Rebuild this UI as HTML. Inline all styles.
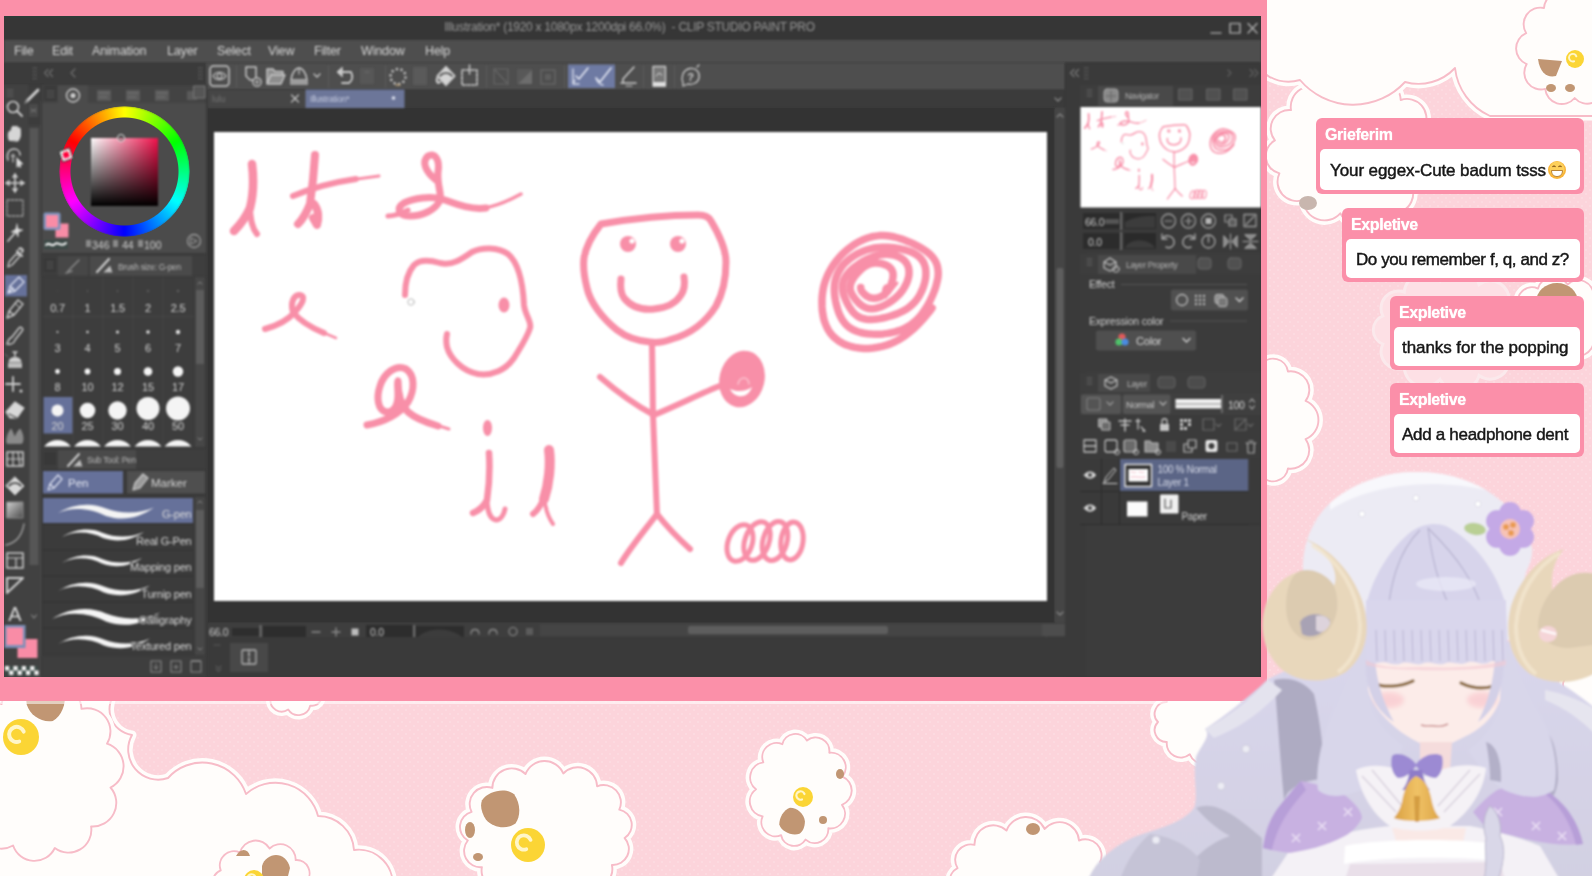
<!DOCTYPE html>
<html lang="en">
<head>
<meta charset="utf-8">
<title>Stream – CLIP STUDIO PAINT PRO</title>
<style>
*{box-sizing:border-box;margin:0;padding:0}
html,body{width:1592px;height:876px;overflow:hidden;background:#fcd6dd;font-family:"Liberation Sans",sans-serif}
#root{position:relative;width:1592px;height:876px;overflow:hidden;background:#fcd5dc}
.abs{position:absolute}
#backdrop,#avatar{position:absolute;left:0;top:0;width:1592px;height:876px}
#frame{position:absolute;left:0;top:0;width:1267px;height:701px;background:#fb90a9}
#win{position:absolute;left:4px;top:16px;width:1257px;height:661px;background:#3a3a3a;overflow:hidden;color:#d4d4d4;font-size:11.5px}
#win>*{filter:blur(.8px)}
#win>#titlebar,#win>#viewport{filter:none}
#win div,#win span,#win svg{position:absolute}
/* chrome rows */
#titlebar{left:0;top:0;width:1257px;height:24px;background:#363636;border-top:2px solid #2f3b38}
#title{left:-3px;top:4px;width:1257px;text-align:center;color:#979797;font-size:12px;letter-spacing:-.27px;white-space:pre}
#menubar{left:0;top:24px;width:1257px;height:23px;background:#4e4e4e}
#menubar span{top:4px;color:#d6d6d6;font-size:12.5px;letter-spacing:-.15px}
#tb-left{left:0;top:47px;width:202px;height:22px;background:#3b3b3b}
#tb-main{left:202px;top:47px;width:1055px;height:27px;background:#4e4e4e}
#tabrow{left:204px;top:74px;width:857px;height:18px;background:#3b3b3b}
#viewport{left:204px;top:92px;width:847px;height:515px;background:#333}
#canvas{left:210px;top:116px;width:833px;height:469px;background:#fff}
#vscroll{left:1051px;top:92px;width:10px;height:515px;background:#444}
#statusrow{left:204px;top:607px;width:857px;height:17px;background:#3d3d3d}
#bottomrow{left:204px;top:624px;width:857px;height:37px;background:#393939}
#toolcol{left:0;top:69px;width:24px;height:592px;background:#424242}
#toolstrip{left:24px;top:85px;width:13px;height:576px;background:#525252}
#leftdock{left:38px;top:69px;width:165px;height:592px;background:#3a3a3a}
#gapR{left:1061px;top:47px;width:15px;height:614px;background:#383838}
#rightdock{left:1076px;top:47px;width:181px;height:614px;background:#343434}
/* chat */
.bub{position:absolute;background:#fb8fa9;border-radius:6px;right:8px;height:74px;filter:blur(.5px)}
.bub .nm{position:absolute;left:9px;top:8px;color:#fff;font-weight:bold;font-size:16px;letter-spacing:-.4px;text-shadow:0 0 1px #fff}
.bub .msg{position:absolute;left:4px;right:4px;top:31px;bottom:4px;background:#fff;border-radius:5px;color:#161616;font-size:17px;line-height:41px;padding-left:10px;white-space:nowrap;letter-spacing:-.3px;-webkit-text-stroke:.45px #161616}
.bub .msg svg{position:absolute;top:11px}
#m1{letter-spacing:-.1px;line-height:44px}#m2{letter-spacing:-.43px}#m3{letter-spacing:-.08px;padding-left:8px}#m4{padding-left:8px;letter-spacing:-.3px}
</style>
</head>
<body>
<div id="root">
<!--BACKDROP-->
<svg id="backdrop" viewBox="0 0 1592 876">
<defs><pattern id="dots" width="8" height="8" patternUnits="userSpaceOnUse"><circle cx="2" cy="2" r="0.9" fill="#fddde3"/><circle cx="6" cy="6" r="0.9" fill="#fddde3"/></pattern></defs>
<rect width="1592" height="876" fill="#fcd4db"/><rect width="1592" height="876" fill="url(#dots)"/>
<path d="M118,690 A26,26 0 0 0 132,735 A30,30 0 0 0 168,778 A46,46 0 0 1 246,794 A44,44 0 0 1 318,816 A36,36 0 0 1 354,850 A34,34 0 0 1 392,890 L-20,890 L-20,690Z" fill="#fffdfb" stroke="#fffdfb" stroke-width="9" stroke-linejoin="round"/><path d="M118,690 A26,26 0 0 0 132,735 A30,30 0 0 0 168,778 A46,46 0 0 1 246,794 A44,44 0 0 1 318,816 A36,36 0 0 1 354,850 A34,34 0 0 1 392,890 L-20,890 L-20,690Z" fill="#fffdfb" stroke="#f7bcc8" stroke-width="1.9" stroke-linejoin="round"/>
<path d="M110.5,787.5 A23.5,23.5 0 0 1 91.1,826.4 A22.8,22.8 0 0 1 54.8,848.0 A22.5,22.5 0 0 1 13.1,845.5 A22.9,22.9 0 0 1 -20.6,819.6 A23.6,23.6 0 0 1 -35.7,778.7 A23.7,23.7 0 0 1 -27.4,735.6 A23.1,23.1 0 0 1 1.6,704.1 A22.6,22.6 0 0 1 42.2,694.1 A22.7,22.7 0 0 1 81.5,708.9 A23.3,23.3 0 0 1 107.0,743.7 A23.7,23.7 0 0 1 110.5,787.5Z" fill="#fffdfb" stroke="#fffdfb" stroke-width="9" stroke-linejoin="round"/><path d="M110.5,787.5 A23.5,23.5 0 0 1 91.1,826.4 A22.8,22.8 0 0 1 54.8,848.0 A22.5,22.5 0 0 1 13.1,845.5 A22.9,22.9 0 0 1 -20.6,819.6 A23.6,23.6 0 0 1 -35.7,778.7 A23.7,23.7 0 0 1 -27.4,735.6 A23.1,23.1 0 0 1 1.6,704.1 A22.6,22.6 0 0 1 42.2,694.1 A22.7,22.7 0 0 1 81.5,708.9 A23.3,23.3 0 0 1 107.0,743.7 A23.7,23.7 0 0 1 110.5,787.5Z" fill="#fffdfb" stroke="#f7bcc8" stroke-width="1.9" stroke-linejoin="round"/>
<g transform="translate(46 700) rotate(10) scale(1.3)"><path d="M-13,-10 C-6,-16 8,-15 13,-8 C16,0 14,10 8,15 C0,18 -10,14 -14,6 C-16,0 -16,-6 -13,-10Z" fill="#c19673"/></g>
<circle cx="21" cy="737" r="18" fill="#fbd535"/><path d="M19.2,741.5 a7.56,7.56 0 1 1 4.5,-9.9" fill="none" stroke="#fff6c8" stroke-width="3.96" stroke-linecap="round"/>
<path d="M320.0,690.0 A10.0,10.0 0 0 1 310.2,705.6 A12.1,12.1 0 0 1 288.2,709.5 A11.2,11.2 0 0 1 270.6,698.7 A9.4,9.4 0 0 1 270.6,681.3 A11.2,11.2 0 0 1 288.2,670.5 A12.1,12.1 0 0 1 310.2,674.4 A10.0,10.0 0 0 1 320.0,690.0Z" fill="#fffdfb" stroke="#fffdfb" stroke-width="9" stroke-linejoin="round"/><path d="M320.0,690.0 A10.0,10.0 0 0 1 310.2,705.6 A12.1,12.1 0 0 1 288.2,709.5 A11.2,11.2 0 0 1 270.6,698.7 A9.4,9.4 0 0 1 270.6,681.3 A11.2,11.2 0 0 1 288.2,670.5 A12.1,12.1 0 0 1 310.2,674.4 A10.0,10.0 0 0 1 320.0,690.0Z" fill="#fffdfb" stroke="#f7bcc8" stroke-width="1.9" stroke-linejoin="round"/>
<path d="M306.0,882.0 A13.0,13.0 0 0 1 295.7,903.9 A15.4,15.4 0 0 1 269.6,915.5 A16.2,16.2 0 0 1 240.0,911.4 A14.2,14.2 0 0 1 220.7,893.6 A12.6,12.6 0 0 1 220.7,870.4 A14.2,14.2 0 0 1 240.0,852.6 A16.2,16.2 0 0 1 269.6,848.5 A15.4,15.4 0 0 1 295.7,860.1 A13.0,13.0 0 0 1 306.0,882.0Z" fill="#fffdfb" stroke="#fffdfb" stroke-width="9" stroke-linejoin="round"/><path d="M306.0,882.0 A13.0,13.0 0 0 1 295.7,903.9 A15.4,15.4 0 0 1 269.6,915.5 A16.2,16.2 0 0 1 240.0,911.4 A14.2,14.2 0 0 1 220.7,893.6 A12.6,12.6 0 0 1 220.7,870.4 A14.2,14.2 0 0 1 240.0,852.6 A16.2,16.2 0 0 1 269.6,848.5 A15.4,15.4 0 0 1 295.7,860.1 A13.0,13.0 0 0 1 306.0,882.0Z" fill="#fffdfb" stroke="#f7bcc8" stroke-width="1.9" stroke-linejoin="round"/>
<path d="M236,856 C240,848 248,848 250,856Z" fill="#c19673"/><path d="M262,866 C266,852 286,850 290,868 L288,876 L262,876Z" fill="#c19673"/>
<circle cx="254" cy="880" r="10" fill="#fbd535"/><path d="M253.0,882.5 a4.2,4.2 0 1 1 2.5,-5.5" fill="none" stroke="#fff6c8" stroke-width="2.2" stroke-linecap="round"/>
<path d="M624.6,838.0 A16.1,16.1 0 0 1 611.9,865.0 A18.3,18.3 0 0 1 584.2,884.5 A20.1,20.1 0 0 1 547.6,892.0 A20.2,20.2 0 0 1 510.8,885.7 A18.5,18.5 0 0 1 481.9,867.1 A16.3,16.3 0 0 1 467.8,840.5 A15.6,15.6 0 0 1 471.6,811.9 A17.1,17.1 0 0 1 492.4,787.9 A19.4,19.4 0 0 1 525.5,774.1 A20.4,20.4 0 0 1 563.3,773.5 A19.5,19.5 0 0 1 597.1,786.3 A17.3,17.3 0 0 1 619.3,809.6 A15.6,15.6 0 0 1 624.6,838.0Z" fill="#fffdfb" stroke="#fffdfb" stroke-width="9" stroke-linejoin="round"/><path d="M624.6,838.0 A16.1,16.1 0 0 1 611.9,865.0 A18.3,18.3 0 0 1 584.2,884.5 A20.1,20.1 0 0 1 547.6,892.0 A20.2,20.2 0 0 1 510.8,885.7 A18.5,18.5 0 0 1 481.9,867.1 A16.3,16.3 0 0 1 467.8,840.5 A15.6,15.6 0 0 1 471.6,811.9 A17.1,17.1 0 0 1 492.4,787.9 A19.4,19.4 0 0 1 525.5,774.1 A20.4,20.4 0 0 1 563.3,773.5 A19.5,19.5 0 0 1 597.1,786.3 A17.3,17.3 0 0 1 619.3,809.6 A15.6,15.6 0 0 1 624.6,838.0Z" fill="#fffdfb" stroke="#f7bcc8" stroke-width="1.9" stroke-linejoin="round"/>
<g transform="translate(501 808) rotate(-15) scale(1.25)"><path d="M-13,-10 C-6,-16 8,-15 13,-8 C16,0 14,10 8,15 C0,18 -10,14 -14,6 C-16,0 -16,-6 -13,-10Z" fill="#c19673"/></g>
<ellipse cx="470" cy="830" rx="5" ry="8" fill="#c19673"/><ellipse cx="478" cy="857" rx="5" ry="4" fill="#c19673"/>
<circle cx="528" cy="845" r="17" fill="#fbd535"/><path d="M526.3,849.25 a7.14,7.14 0 1 1 4.25,-9.350000000000001" fill="none" stroke="#fff6c8" stroke-width="3.74" stroke-linecap="round"/>
<path d="M842.0,804.8 A14.7,14.7 0 0 1 828.3,828.3 A13.7,13.7 0 0 1 805.6,839.6 A13.4,13.4 0 0 1 781.1,835.2 A14.2,14.2 0 0 1 762.6,816.4 A15.1,15.1 0 0 1 756.0,789.3 A15.1,15.1 0 0 1 763.3,762.4 A14.2,14.2 0 0 1 782.3,744.2 A13.4,13.4 0 0 1 806.9,740.6 A13.7,13.7 0 0 1 829.3,752.7 A14.7,14.7 0 0 1 842.4,776.6 A15.2,15.2 0 0 1 842.0,804.8Z" fill="#fffdfb" stroke="#fffdfb" stroke-width="9" stroke-linejoin="round"/><path d="M842.0,804.8 A14.7,14.7 0 0 1 828.3,828.3 A13.7,13.7 0 0 1 805.6,839.6 A13.4,13.4 0 0 1 781.1,835.2 A14.2,14.2 0 0 1 762.6,816.4 A15.1,15.1 0 0 1 756.0,789.3 A15.1,15.1 0 0 1 763.3,762.4 A14.2,14.2 0 0 1 782.3,744.2 A13.4,13.4 0 0 1 806.9,740.6 A13.7,13.7 0 0 1 829.3,752.7 A14.7,14.7 0 0 1 842.4,776.6 A15.2,15.2 0 0 1 842.0,804.8Z" fill="#fffdfb" stroke="#f7bcc8" stroke-width="1.9" stroke-linejoin="round"/>
<g transform="translate(792 822) rotate(200) scale(0.85)"><path d="M-13,-10 C-6,-16 8,-15 13,-8 C16,0 14,10 8,15 C0,18 -10,14 -14,6 C-16,0 -16,-6 -13,-10Z" fill="#c19673"/></g>
<ellipse cx="840" cy="774" rx="4" ry="5" fill="#c19673"/><ellipse cx="823" cy="820" rx="4" ry="4" fill="#c19673"/>
<circle cx="803" cy="797" r="10" fill="#fbd535"/><path d="M802.0,799.5 a4.2,4.2 0 1 1 2.5,-5.5" fill="none" stroke="#fff6c8" stroke-width="2.2" stroke-linecap="round"/>
<path d="M1102.5,887.9 A15.5,15.5 0 0 1 1085.5,911.1 A18.9,18.9 0 0 1 1053.5,925.4 A20.7,20.7 0 0 1 1015.3,927.0 A19.5,19.5 0 0 1 981.0,915.5 A16.3,16.3 0 0 1 959.8,893.9 A14.0,14.0 0 0 1 957.5,868.1 A15.5,15.5 0 0 1 974.5,844.9 A18.9,18.9 0 0 1 1006.5,830.6 A20.7,20.7 0 0 1 1044.7,829.0 A19.5,19.5 0 0 1 1079.0,840.5 A16.3,16.3 0 0 1 1100.2,862.1 A14.0,14.0 0 0 1 1102.5,887.9Z" fill="#fffdfb" stroke="#fffdfb" stroke-width="9" stroke-linejoin="round"/><path d="M1102.5,887.9 A15.5,15.5 0 0 1 1085.5,911.1 A18.9,18.9 0 0 1 1053.5,925.4 A20.7,20.7 0 0 1 1015.3,927.0 A19.5,19.5 0 0 1 981.0,915.5 A16.3,16.3 0 0 1 959.8,893.9 A14.0,14.0 0 0 1 957.5,868.1 A15.5,15.5 0 0 1 974.5,844.9 A18.9,18.9 0 0 1 1006.5,830.6 A20.7,20.7 0 0 1 1044.7,829.0 A19.5,19.5 0 0 1 1079.0,840.5 A16.3,16.3 0 0 1 1100.2,862.1 A14.0,14.0 0 0 1 1102.5,887.9Z" fill="#fffdfb" stroke="#f7bcc8" stroke-width="1.9" stroke-linejoin="round"/>
<ellipse cx="1033" cy="829" rx="7" ry="6" fill="#c19673"/>
<path d="M1429.1,159.6 A18.6,18.6 0 0 1 1413.0,189.9 A20.5,20.5 0 0 1 1380.5,209.6 A21.8,21.8 0 0 1 1340.3,213.3 A21.2,21.2 0 0 1 1303.3,200.0 A19.4,19.4 0 0 1 1279.4,173.4 A17.9,17.9 0 0 1 1274.9,140.4 A18.6,18.6 0 0 1 1291.0,110.1 A20.5,20.5 0 0 1 1323.5,90.4 A21.8,21.8 0 0 1 1363.7,86.7 A21.2,21.2 0 0 1 1400.7,100.0 A19.4,19.4 0 0 1 1424.6,126.6 A17.9,17.9 0 0 1 1429.1,159.6Z" fill="#fffdfb" stroke="#fffdfb" stroke-width="9" stroke-linejoin="round"/><path d="M1429.1,159.6 A18.6,18.6 0 0 1 1413.0,189.9 A20.5,20.5 0 0 1 1380.5,209.6 A21.8,21.8 0 0 1 1340.3,213.3 A21.2,21.2 0 0 1 1303.3,200.0 A19.4,19.4 0 0 1 1279.4,173.4 A17.9,17.9 0 0 1 1274.9,140.4 A18.6,18.6 0 0 1 1291.0,110.1 A20.5,20.5 0 0 1 1323.5,90.4 A21.8,21.8 0 0 1 1363.7,86.7 A21.2,21.2 0 0 1 1400.7,100.0 A19.4,19.4 0 0 1 1424.6,126.6 A17.9,17.9 0 0 1 1429.1,159.6Z" fill="#fffdfb" stroke="#f7bcc8" stroke-width="1.9" stroke-linejoin="round"/>
<path d="M1250,-20 L1250,52 A40,40 0 0 0 1300,80 A70,70 0 0 0 1405,82 A50,50 0 0 0 1455,68 A60,60 0 0 0 1490,116 L1600,116 L1600,-20Z" fill="#fffdfb" stroke="#fffdfb" stroke-width="9" stroke-linejoin="round"/><path d="M1250,-20 L1250,52 A40,40 0 0 0 1300,80 A70,70 0 0 0 1405,82 A50,50 0 0 0 1455,68 A60,60 0 0 0 1490,116 L1600,116 L1600,-20Z" fill="#fffdfb" stroke="#f7bcc8" stroke-width="1.9" stroke-linejoin="round"/>
<path d="M1621.8,62.8 A16.7,16.7 0 0 1 1604.0,88.0 A16.7,16.7 0 0 1 1574.7,98.0 A16.7,16.7 0 0 1 1545.2,88.9 A16.7,16.7 0 0 1 1526.7,64.1 A16.7,16.7 0 0 1 1526.2,33.2 A16.7,16.7 0 0 1 1544.0,8.0 A16.7,16.7 0 0 1 1573.3,-2.0 A16.7,16.7 0 0 1 1602.8,7.1 A16.7,16.7 0 0 1 1621.3,31.9 A16.7,16.7 0 0 1 1621.8,62.8Z" fill="#fffdfb" stroke="#fffdfb" stroke-width="9" stroke-linejoin="round"/><path d="M1621.8,62.8 A16.7,16.7 0 0 1 1604.0,88.0 A16.7,16.7 0 0 1 1574.7,98.0 A16.7,16.7 0 0 1 1545.2,88.9 A16.7,16.7 0 0 1 1526.7,64.1 A16.7,16.7 0 0 1 1526.2,33.2 A16.7,16.7 0 0 1 1544.0,8.0 A16.7,16.7 0 0 1 1573.3,-2.0 A16.7,16.7 0 0 1 1602.8,7.1 A16.7,16.7 0 0 1 1621.3,31.9 A16.7,16.7 0 0 1 1621.8,62.8Z" fill="#fffdfb" stroke="#f7bcc8" stroke-width="1.9" stroke-linejoin="round"/>
<path d="M1538,59 L1562,61 L1556,76 C1548,78 1540,74 1538,59Z" fill="#c19673"/><ellipse cx="1551" cy="88" rx="5" ry="4" fill="#c19673"/><ellipse cx="1570" cy="88" rx="5" ry="4" fill="#c19673"/>
<circle cx="1575" cy="59" r="9" fill="#fbd535"/><path d="M1574.1,61.25 a3.78,3.78 0 1 1 2.25,-4.95" fill="none" stroke="#fff6c8" stroke-width="1.98" stroke-linecap="round"/>
<ellipse cx="1308" cy="203" rx="9" ry="7" fill="#c8b6ae"/>
<path d="M1520.0,330.0 A15.8,15.8 0 0 1 1508.9,357.0 A18.9,18.9 0 0 1 1479.1,375.5 A21.2,21.2 0 0 1 1440.0,379.5 A20.4,20.4 0 0 1 1404.2,367.8 A17.2,17.2 0 0 1 1382.8,344.1 A15.2,15.2 0 0 1 1382.8,315.9 A17.2,17.2 0 0 1 1404.2,292.2 A20.4,20.4 0 0 1 1440.0,280.5 A21.2,21.2 0 0 1 1479.1,284.5 A18.9,18.9 0 0 1 1508.9,303.0 A15.8,15.8 0 0 1 1520.0,330.0Z" fill="#fde0e5" stroke="#fbe9ec" stroke-width="3"/>
<path d="M1305.6,439.2 A18.5,18.5 0 0 1 1288.0,468.5 A15.0,15.0 0 0 1 1261.0,475.1 A16.5,16.5 0 0 1 1237.3,456.0 A20.1,20.1 0 0 1 1228.0,419.9 A20.1,20.1 0 0 1 1237.4,384.0 A16.4,16.4 0 0 1 1261.1,364.8 A15.0,15.0 0 0 1 1288.0,371.5 A18.5,18.5 0 0 1 1305.6,400.9 A20.7,20.7 0 0 1 1305.6,439.2Z" fill="#fffdfb" stroke="#fffdfb" stroke-width="9" stroke-linejoin="round"/><path d="M1305.6,439.2 A18.5,18.5 0 0 1 1288.0,468.5 A15.0,15.0 0 0 1 1261.0,475.1 A16.5,16.5 0 0 1 1237.3,456.0 A20.1,20.1 0 0 1 1228.0,419.9 A20.1,20.1 0 0 1 1237.4,384.0 A16.4,16.4 0 0 1 1261.1,364.8 A15.0,15.0 0 0 1 1288.0,371.5 A18.5,18.5 0 0 1 1305.6,400.9 A20.7,20.7 0 0 1 1305.6,439.2Z" fill="#fffdfb" stroke="#f7bcc8" stroke-width="1.9" stroke-linejoin="round"/>
<path d="M1604.0,318.0 A13.0,13.0 0 0 1 1593.7,339.9 A15.4,15.4 0 0 1 1567.6,351.5 A16.2,16.2 0 0 1 1538.0,347.4 A14.2,14.2 0 0 1 1518.7,329.6 A12.6,12.6 0 0 1 1518.7,306.4 A14.2,14.2 0 0 1 1538.0,288.6 A16.2,16.2 0 0 1 1567.6,284.5 A15.4,15.4 0 0 1 1593.7,296.1 A13.0,13.0 0 0 1 1604.0,318.0Z" fill="#fffdfb" stroke="#fffdfb" stroke-width="9" stroke-linejoin="round"/><path d="M1604.0,318.0 A13.0,13.0 0 0 1 1593.7,339.9 A15.4,15.4 0 0 1 1567.6,351.5 A16.2,16.2 0 0 1 1538.0,347.4 A14.2,14.2 0 0 1 1518.7,329.6 A12.6,12.6 0 0 1 1518.7,306.4 A14.2,14.2 0 0 1 1538.0,288.6 A16.2,16.2 0 0 1 1567.6,284.5 A15.4,15.4 0 0 1 1593.7,296.1 A13.0,13.0 0 0 1 1604.0,318.0Z" fill="#fffdfb" stroke="#f7bcc8" stroke-width="1.9" stroke-linejoin="round"/>
<ellipse cx="1557" cy="302" rx="21" ry="19" fill="#c19673"/>
<path d="M1626.0,692.0 A11.0,11.0 0 0 1 1617.2,710.4 A12.2,12.2 0 0 1 1596.0,718.0 A12.2,12.2 0 0 1 1574.8,710.4 A11.0,11.0 0 0 1 1566.0,692.0 A11.0,11.0 0 0 1 1574.8,673.6 A12.2,12.2 0 0 1 1596.0,666.0 A12.2,12.2 0 0 1 1617.2,673.6 A11.0,11.0 0 0 1 1626.0,692.0Z" fill="#fffdfb" stroke="#fffdfb" stroke-width="9" stroke-linejoin="round"/><path d="M1626.0,692.0 A11.0,11.0 0 0 1 1617.2,710.4 A12.2,12.2 0 0 1 1596.0,718.0 A12.2,12.2 0 0 1 1574.8,710.4 A11.0,11.0 0 0 1 1566.0,692.0 A11.0,11.0 0 0 1 1574.8,673.6 A12.2,12.2 0 0 1 1596.0,666.0 A12.2,12.2 0 0 1 1617.2,673.6 A11.0,11.0 0 0 1 1626.0,692.0Z" fill="#fffdfb" stroke="#f7bcc8" stroke-width="1.9" stroke-linejoin="round"/>
<path d="M1250.0,722.0 A11.8,11.8 0 0 1 1241.2,742.0 A14.1,14.1 0 0 1 1218.2,754.3 A15.4,15.4 0 0 1 1189.8,754.3 A14.1,14.1 0 0 1 1166.8,742.0 A11.8,11.8 0 0 1 1158.0,722.0 A11.8,11.8 0 0 1 1166.8,702.0 A14.1,14.1 0 0 1 1189.8,689.7 A15.4,15.4 0 0 1 1218.2,689.7 A14.1,14.1 0 0 1 1241.2,702.0 A11.8,11.8 0 0 1 1250.0,722.0Z" fill="#fffdfb" stroke="#fffdfb" stroke-width="9" stroke-linejoin="round"/><path d="M1250.0,722.0 A11.8,11.8 0 0 1 1241.2,742.0 A14.1,14.1 0 0 1 1218.2,754.3 A15.4,15.4 0 0 1 1189.8,754.3 A14.1,14.1 0 0 1 1166.8,742.0 A11.8,11.8 0 0 1 1158.0,722.0 A11.8,11.8 0 0 1 1166.8,702.0 A14.1,14.1 0 0 1 1189.8,689.7 A15.4,15.4 0 0 1 1218.2,689.7 A14.1,14.1 0 0 1 1241.2,702.0 A11.8,11.8 0 0 1 1250.0,722.0Z" fill="#fffdfb" stroke="#f7bcc8" stroke-width="1.9" stroke-linejoin="round"/>
<rect x="0" y="701" width="1267" height="3" fill="#fff" opacity=".55"/>
</svg>
<div id="frame"></div>
<div id="win">
  <div id="titlebar"></div>
  <div id="title">Illustration* (1920 x 1080px 1200dpi 66.0%)  - CLIP STUDIO PAINT PRO</div>
  <div id="menubar">
    <span style="left:10px">File</span><span style="left:48px">Edit</span><span style="left:88px">Animation</span><span style="left:163px">Layer</span><span style="left:213px">Select</span><span style="left:264px">View</span><span style="left:310px">Filter</span><span style="left:357px">Window</span><span style="left:421px">Help</span>
  </div>
  <div id="tb-left"></div>
  <div id="tb-main"></div>
  <div id="tabrow"></div>
  <div id="viewport"></div>
  <div id="canvas"><svg viewBox="214 132 833 469" width="833" height="469" style="left:0;top:0"><g id="doodles" fill="none" stroke="#f88fa8" stroke-linecap="round" stroke-linejoin="round" stroke-width="7">
<!-- doodle l -->
<path d="M252,164 C254,180 253,196 250,208 C246,217 240,225 234,231" stroke-width="8.5"/>
<path d="M250,206 C250,218 252,228 257,234" stroke-width="6"/>
<!-- doodle t -->
<path d="M315,155 C314,172 312,190 310,204 C306,214 302,220 298,224" stroke-width="8"/>
<path d="M314,204 C319,210 319,219 317,225 L313,218" stroke-width="8"/>
<path d="M293,196 C312,188 335,182 356,179" stroke-width="6"/>
<path d="M350,180 L379,176" stroke-width="3"/>
<!-- doodle loop -->
<path d="M436,180 C426,172 421,162 428,156 C435,152 440,160 438,172 C437,186 442,194 440,200 C436,210 422,216 410,216 C398,216 396,208 404,203 C414,198 430,196 442,199 C456,204 470,210 486,208" />
<path d="M408,210 C400,214 394,216 388,216" stroke-width="5"/>
<path d="M484,208 C498,206 510,200 521,194" stroke-width="3.5"/>
<!-- ribbon small -->
<path d="M265,329 C276,326 288,320 295,312 C303,303 306,296 300,295 C294,294 290,303 293,312 C299,320 312,328 324,333" stroke-width="6"/>
<path d="M322,332 L336,338" stroke-width="2.5"/>
<!-- face profile -->
<path d="M405,295 C405,284 408,272 414,265 C420,259 430,260 440,263 C452,266 462,259 472,252 C482,247 498,247 508,254 C520,264 523,285 524,305 C525,315 532,322 530,328 C527,338 520,348 514,358 C506,370 492,376 478,374 C462,371 450,358 447,347 C446,342 446,338 447,334" stroke-width="6"/>
<ellipse cx="504" cy="305" rx="5.5" ry="7.5" fill="#f88fa8" stroke="none"/>
<circle cx="411" cy="302" r="3.2" stroke="#b9b9b9" stroke-width="1"/>
<!-- loop 2 -->
<path d="M367,425 C384,422 400,414 408,402 C415,390 415,375 406,369 C396,364 384,373 380,386 C376,398 378,410 386,412 C394,413 398,405 398,395 C398,388 397,383 398,381 C398,392 400,404 408,412 C416,419 428,423 438,426"/>
<path d="M436,425 L449,429" stroke-width="3"/>
<!-- i -->
<ellipse cx="487.5" cy="428" rx="4.5" ry="8" fill="#f88fa8" stroke="none"/>
<path d="M489,453 C490,468 489,486 487,500 C484,506 478,511 473,513" stroke-width="6.5"/>
<path d="M487,498 C487,510 490,519 496,520 C501,520 504,514 505,509" stroke-width="5"/>
<!-- l -->
<path d="M549,450 C551,464 549,484 544,499" stroke-width="10"/>
<path d="M544,497 C541,506 537,511 533,514" stroke-width="6"/>
<path d="M544,496 C545,508 548,517 553,524" stroke-width="4"/>
<!-- stick figure -->
<path d="M601,224 C630,219 665,215 698,215 C704,215 709,217 711,221 C720,236 726,250 726,262 C726,280 722,295 716,306 C706,322 690,334 672,339 C664,342 656,343 650,342 C638,341 626,337 617,330 C602,318 590,302 587,288 C584,276 583,266 584,258 C586,246 593,234 601,224 Z"/>
<circle cx="628" cy="244" r="8" fill="#f88fa8" stroke="none"/>
<circle cx="678" cy="244" r="8" fill="#f88fa8" stroke="none"/>
<circle cx="632" cy="241" r="2.6" fill="#fff" stroke="none"/>
<circle cx="682" cy="241" r="2.6" fill="#fff" stroke="none"/>
<path d="M621,279 C620,288 621,294 624,298 C632,308 644,310 654,309 C666,308 676,303 681,295 C685,289 685,283 684,277"/>
<path d="M652,343 L653,415 L657,515" stroke-width="6"/>
<path d="M600,377 C615,390 635,405 654,415 C680,404 702,393 722,385" stroke-width="6"/>
<path d="M657,514 C645,530 630,548 621,563" stroke-width="6"/>
<path d="M657,514 C668,528 680,540 690,549" stroke-width="6"/>
<ellipse cx="742" cy="379" rx="21" ry="27" transform="rotate(14 742 379)" fill="#f88fa8" stroke="#f88fa8" stroke-width="3"/>
<path d="M730,389 C735,399 748,399 752,387 C746,392 736,392 730,389 Z" fill="#fff" stroke="none"/>
<path d="M738,384 C740,376 748,376 749,384" stroke="#fbc3d0" stroke-width="1.5"/>
<!-- spiral -->
<path d="M932.1,308.0 L929.2,311.9 L926.1,315.6 L923.0,319.3 L919.8,322.7 L916.5,326.1 L913.2,329.2 L909.7,332.1 L906.2,334.9 L902.6,337.4 L898.8,339.7 L894.9,341.8 L890.8,343.6 L886.6,345.1 L882.2,346.4 L877.7,347.3 L873.1,348.0 L868.4,348.4 L863.8,348.4 L859.2,348.0 L854.8,347.4 L850.5,346.3 L846.4,345.0 L842.6,343.3 L839.1,341.3 L836.0,338.9 L833.2,336.4 L830.7,333.6 L828.6,330.5 L826.9,327.4 L825.5,324.1 L824.3,320.7 L823.4,317.2 L822.8,313.7 L822.3,310.2 L822.1,306.7 L822.0,303.3 L822.0,299.8 L822.2,296.3 L822.6,292.9 L823.1,289.5 L823.8,286.0 L824.8,282.5 L826.0,279.1 L827.4,275.6 L829.1,272.0 L831.1,268.5 L833.3,265.0 L835.9,261.5 L838.7,258.1 L841.7,254.8 L845.0,251.6 L848.5,248.7 L852.2,245.9 L855.9,243.5 L859.8,241.3 L863.7,239.5 L867.6,238.0 L871.6,236.8 L875.5,236.1 L879.4,235.6 L883.2,235.5 L887.0,235.8 L890.8,236.3 L894.5,237.0 L898.2,238.0 L901.8,239.1 L905.4,240.5 L909.0,241.9 L912.5,243.4 L915.9,245.1 L919.1,246.8 L922.3,248.7 L925.2,250.6 L927.9,252.6 L930.4,254.7 L932.5,257.0 L934.4,259.5 L935.9,262.1 L937.0,264.8 L937.7,267.8 L938.1,270.9 L938.2,274.2 L937.9,277.7 L937.2,281.2 L936.3,284.9 L935.2,288.7 L933.8,292.4 L932.2,296.2 L930.5,299.9 L928.6,303.5 L926.6,307.0 L924.4,310.4 L922.2,313.5 L919.8,316.5 L917.3,319.2 L914.6,321.7 L911.8,324.0 L908.8,326.0 L905.7,327.8 L902.3,329.4 L898.8,330.7 L895.1,331.8 L891.3,332.7 L887.4,333.4 L883.4,333.9 L879.4,334.2 L875.4,334.3 L871.5,334.1 L867.6,333.8 L864.0,333.2 L860.5,332.5 L857.3,331.5 L854.3,330.3 L851.6,328.9 L849.2,327.3 L847.1,325.6 L845.1,323.6 L843.5,321.5 L842.0,319.3 L840.7,316.9 L839.5,314.4 L838.5,311.8 L837.6,309.1 L836.8,306.4 L836.1,303.5 L835.5,300.7 L835.0,297.7 L834.6,294.8 L834.4,291.8 L834.3,288.8 L834.4,285.8 L834.8,282.7 L835.5,279.7 L836.4,276.7 L837.6,273.8 L839.1,270.9 L840.9,268.1 L843.0,265.3 L845.3,262.8 L847.9,260.4 L850.7,258.1 L853.6,256.1 L856.7,254.2 L859.9,252.6 L863.1,251.2 L866.3,250.0 L869.6,249.1 L872.8,248.3 L875.9,247.8 L879.1,247.4 L882.1,247.3 L885.2,247.2 L888.1,247.3 L891.1,247.5 L894.0,247.8 L896.9,248.2 L899.7,248.7 L902.5,249.3 L905.3,250.0 L908.0,250.8 L910.6,251.8 L913.0,252.8 L915.4,254.1 L917.5,255.5 L919.5,257.1 L921.2,258.9 L922.7,260.9 L923.9,263.1 L924.8,265.5 L925.5,268.0 L925.8,270.7 L925.9,273.5 L925.8,276.4 L925.4,279.4 L924.7,282.4 L923.9,285.3 L922.9,288.2 L921.7,291.0 L920.4,293.7 L919.0,296.3 L917.4,298.7 L915.7,300.9 L913.8,303.0 L911.9,304.9 L909.8,306.7 L907.6,308.3 L905.3,309.8 L902.8,311.2 L900.2,312.4 L897.5,313.6 L894.7,314.6 L891.8,315.6 L888.8,316.5 L885.8,317.3 L882.8,318.0 L879.9,318.6 L876.9,319.0 L874.1,319.3 L871.4,319.5 L868.8,319.4 L866.3,319.2 L864.0,318.8 L861.8,318.2 L859.8,317.4 L858.0,316.4 L856.3,315.2 L854.7,313.8 L853.2,312.3 L851.8,310.6 L850.5,308.8 L849.3,306.9 L848.1,304.9 L847.0,302.8 L846.0,300.7 L845.1,298.6 L844.2,296.4 L843.5,294.3 L843.0,292.1 L842.6,290.0 L842.4,287.8 L842.5,285.7 L842.8,283.6 L843.3,281.5 L844.0,279.5 L845.1,277.5 L846.3,275.5 L847.8,273.6 L849.4,271.7 L851.2,269.9 L853.2,268.2 L855.2,266.5 L857.4,265.0 L859.5,263.5 L861.7,262.1 L863.9,260.8 L866.1,259.7 L868.3,258.6 L870.4,257.7 L872.5,256.9 L874.6,256.1 L876.7,255.5 L878.8,255.1 L880.9,254.7 L883.0,254.5 L885.1,254.3 L887.2,254.3 L889.4,254.5 L891.5,254.7 L893.6,255.1 L895.7,255.7 L897.7,256.4 L899.6,257.2 L901.4,258.3 L903.0,259.4 L904.5,260.7 L905.8,262.2 L906.9,263.8 L907.7,265.5 L908.4,267.3 L908.8,269.2 L909.0,271.2 L909.0,273.2 L908.9,275.2 L908.5,277.2 L908.0,279.1 L907.4,281.1 L906.7,282.9 L905.8,284.8 L904.9,286.5 L903.9,288.2 L902.9,289.8 L901.7,291.3 L900.5,292.8 L899.3,294.3 L897.9,295.7 L896.5,297.0 L895.0,298.3 L893.4,299.6 L891.7,300.9 L889.9,302.1 L888.1,303.2 L886.2,304.3 L884.3,305.3 L882.3,306.2 L880.3,307.0 L878.3,307.6 L876.4,308.2 L874.4,308.5 L872.6,308.7 L870.7,308.7 L869.0,308.5 L867.3,308.2 L865.8,307.7 L864.3,307.0 L862.8,306.2 L861.5,305.3 L860.2,304.3 L858.9,303.2 L857.8,302.0 L856.7,300.8 L855.6,299.5 L854.6,298.2 L853.7,296.9 L852.8,295.6 L852.1,294.3 L851.4,293.0 L850.9,291.8 L850.5,290.5 L850.2,289.1 L850.1,287.8 L850.1,286.5 L850.4,285.1 L850.7,283.7 L851.2,282.3 L851.9,280.9 L852.7,279.4 L853.6,278.0 L854.6,276.5 L855.7,275.1 L856.9,273.7 L858.1,272.3 L859.4,271.0 L860.6,269.8 L861.9,268.7 L863.2,267.6 L864.5,266.7 L865.8,265.8 L867.2,265.1 L868.5,264.5 L869.9,264.0 L871.3,263.6 L872.8,263.3 L874.2,263.1 L875.8,263.0 L877.3,263.0 L878.8,263.2 L880.4,263.4 L881.9,263.7 L883.4,264.1 L884.8,264.6 L886.2,265.1 L887.4,265.8 L888.6,266.5 L889.6,267.3 L890.5,268.2 L891.3,269.1 L891.9,270.1 L892.4,271.2 L892.8,272.3 L893.0,273.4 L893.1,274.6 L893.1,275.8 L893.0,277.0 L892.8,278.2 L892.6,279.4 L892.3,280.6 L892.0,281.8 L891.6,283.0 L891.2,284.2 L890.8,285.3 L890.3,286.4 L889.8,287.5 L889.2,288.6 L888.6,289.6 L887.9,290.7 L887.2,291.6 L886.4,292.6 L885.5,293.5 L884.5,294.3 L883.5,295.1 L882.4,295.8 L881.3,296.4 L880.2,297.0 L879.0,297.4 L877.8,297.8 L876.6,298.1 L875.4,298.2 L874.3,298.3 L873.1,298.3 L872.1,298.1 L871.1,297.9 L870.1,297.7 L869.2,297.3 L868.3,296.9 L867.5,296.5 L866.7,296.0 L865.9,295.5 L865.3,294.9 L864.6,294.4 L864.0,293.8 L863.4,293.2 L862.9,292.7 L862.4,292.1 L861.9,291.5 L861.6,290.8 L861.2,290.2 L861.0,289.5 L860.8,288.8 L860.7,288.1 L860.7,287.4" stroke-width="7.5"/>
<path d="M886,297 C881,291 884,284 890,286 M889,293 L897,283" stroke-width="3"/>
<!-- scribble -->
<g stroke-width="5">
<ellipse cx="740" cy="543" rx="12" ry="19" transform="rotate(20 740 543)"/>
<ellipse cx="757" cy="541" rx="12" ry="20" transform="rotate(20 757 541)"/>
<ellipse cx="775" cy="541" rx="12" ry="20" transform="rotate(16 775 541)"/>
<ellipse cx="792" cy="541" rx="11" ry="19" transform="rotate(8 792 541)"/>
</g>
</g></svg></div>
  <div id="vscroll"></div>
  <div id="statusrow"></div>
  <div id="bottomrow"></div>
  <div id="toolcol"></div>
  <div id="toolstrip"></div>
  <div id="leftdock"></div>
  <div id="gapR"></div>
  <div id="rightdock"></div>
<svg id="chrome" style="left:-4px;top:-16px" width="1592" height="876" viewBox="0 0 1592 876" font-family="Liberation Sans, sans-serif" stroke-linecap="round" stroke-linejoin="round">
<path d="M1211,33 L1221,33" stroke="#9c9c9c" stroke-width="1.6" fill="none" />
<rect x="1230" y="23.5" width="10" height="9.5" fill="none" stroke="#9c9c9c" stroke-width="1.7"/>
<path d="M1248,23.5 L1257,33 M1257,23.5 L1248,33" stroke="#a8a8a8" stroke-width="1.5" fill="none" />
<circle cx="33.5" cy="68" r="0.9" fill="#5c5c5c" />
<circle cx="36" cy="68" r="0.9" fill="#5c5c5c" />
<circle cx="199" cy="68" r="0.9" fill="#5c5c5c" />
<circle cx="201.5" cy="68" r="0.9" fill="#5c5c5c" />
<circle cx="33.5" cy="71.5" r="0.9" fill="#5c5c5c" />
<circle cx="36" cy="71.5" r="0.9" fill="#5c5c5c" />
<circle cx="199" cy="71.5" r="0.9" fill="#5c5c5c" />
<circle cx="201.5" cy="71.5" r="0.9" fill="#5c5c5c" />
<circle cx="33.5" cy="75" r="0.9" fill="#5c5c5c" />
<circle cx="36" cy="75" r="0.9" fill="#5c5c5c" />
<circle cx="199" cy="75" r="0.9" fill="#5c5c5c" />
<circle cx="201.5" cy="75" r="0.9" fill="#5c5c5c" />
<circle cx="33.5" cy="78.5" r="0.9" fill="#5c5c5c" />
<circle cx="36" cy="78.5" r="0.9" fill="#5c5c5c" />
<circle cx="199" cy="78.5" r="0.9" fill="#5c5c5c" />
<circle cx="201.5" cy="78.5" r="0.9" fill="#5c5c5c" />
<path d="M48,69.5 L44.5,73 L48,76.5 M52.5,69.5 L49,73 L52.5,76.5" stroke="#6f6f6f" stroke-width="1.2" fill="none" />
<path d="M75,69 L71,73 L75,77" stroke="#6f6f6f" stroke-width="1.2" fill="none" />
<rect x="210" y="66" width="19" height="20" rx="3.5" fill="none" stroke="#c9c9c9" stroke-width="1.5"/>
<path d="M213,76 C216,71 223,71 226,76 C223,81 216,81 213,76Z M219.5,73.5 a2.5,2.5 0 1 0 0.01,0" stroke="#c9c9c9" stroke-width="1.2" fill="none" />
<path d="M236.5,66 L236.5,87" stroke="#5e5e5e" stroke-width="1" fill="none" />
<path d="M246,67 L256,67 L256,80 L250,80 L246,76Z" stroke="#c9c9c9" stroke-width="1.5" fill="none" />
<circle cx="257" cy="82" r="4.2" fill="#4e4e4e" stroke="#c9c9c9" stroke-width="1.3"/>
<path d="M255,82 L259,82 M257,80 L257,84" stroke="#c9c9c9" stroke-width="1" fill="none" />
<path d="M267,84 L267,69 L273,69 L275,71.5 L283,71.5 L283,75 M267,84 L271,75 L285,75 L281,84Z" stroke="#c9c9c9" stroke-width="1.4" fill="#8d8d8d" />
<path d="M291,80 C292,72 296,68 299,68 C302,68 306,72 307,80Z" stroke="#c9c9c9" stroke-width="1.4" fill="none" />
<rect x="290" y="80" width="18" height="5" fill="#9c9c9c" />
<path d="M299,68 L299,74" stroke="#c9c9c9" stroke-width="1.2" fill="none" />
<path d="M314,74 L317,77 L320,74" stroke="#c9c9c9" stroke-width="1.3" fill="none" />
<path d="M328.5,66 L328.5,87" stroke="#5e5e5e" stroke-width="1" fill="none" />
<path d="M338,72 L351,72 C353,76 353,80 349,83 L342,83" stroke="#c9c9c9" stroke-width="1.8" fill="none" />
<path d="M342,67.5 L337,72 L342,76.5Z" stroke="#c9c9c9" stroke-width="1" fill="#c9c9c9" />
<rect x="360" y="68" width="14" height="16" fill="#575757" />
<path d="M365,72 L369,72" stroke="#707070" stroke-width="1.2" fill="none" />
<path d="M385.5,66 L385.5,87" stroke="#5e5e5e" stroke-width="1" fill="none" />
<circle cx="398" cy="76.5" r="7.5" fill="none" stroke="#c9c9c9" stroke-width="2.4" stroke-dasharray="2.2 2.5" stroke-linecap="butt"/>
<path d="M396,85 L400,85" stroke="#b9a07a" stroke-width="1.5" fill="none" />
<rect x="413" y="67" width="14" height="18" fill="#5a5a5a" />
<path d="M446,66.5 L455,76 L446,85.5 L437,76Z" stroke="#c9c9c9" stroke-width="1.2" fill="#d4d4d4" />
<path d="M440,76 C443,72 449,72 452,76" stroke="#4e4e4e" stroke-width="1.6" fill="none" />
<path d="M437,78 C436,82 438,84 440,82" stroke="#d4d4d4" stroke-width="2" fill="none" />
<rect x="462" y="70" width="15" height="15" fill="none" stroke="#c9c9c9" stroke-width="1.6" stroke-dasharray="3 1.6"/>
<path d="M469.5,65 L469.5,74" stroke="#c9c9c9" stroke-width="1.5" fill="none" />
<path d="M486.5,66 L486.5,87" stroke="#5e5e5e" stroke-width="1" fill="none" />
<rect x="494" y="69" width="14" height="15" fill="none" stroke="#666" stroke-width="1.2"/>
<path d="M494,69 L508,84" stroke="#666" stroke-width="1.2" fill="none" />
<rect x="517" y="69" width="15" height="15" fill="#585858"/>
<path d="M532,70 L532,84 L518,84Z" stroke="#6d6d6d" stroke-width="0" fill="#6d6d6d" />
<rect x="541" y="70" width="14" height="14" fill="none" stroke="#666" stroke-width="1.4"/>
<rect x="545" y="74" width="6" height="6" fill="#5e5e5e" />
<path d="M564.5,66 L564.5,87" stroke="#5e5e5e" stroke-width="1" fill="none" />
<rect x="568" y="64.5" width="47" height="23.5" fill="#6e7aa3" />
<path d="M573,69 L573,84 L579,84 M573,84 L575,80" stroke="#d5daea" stroke-width="1.4" fill="none" />
<path d="M576,76 L579,79 L588,68" stroke="#e6e9f4" stroke-width="1.6" fill="none" />
<path d="M596,78 L600,82 L611,68" stroke="#e6e9f4" stroke-width="1.6" fill="none" />
<path d="M596,78 C597,82 599,84 603,85" stroke="#d5daea" stroke-width="1.3" fill="none" />
<path d="M621,83 L636,83 M623,79 L623,83 M623,79 L634,67" stroke="#c9c9c9" stroke-width="1.6" fill="none" />
<path d="M626,86 L632,86" stroke="#c9c9c9" stroke-width="1" fill="none" />
<path d="M643.5,66 L643.5,87" stroke="#5e5e5e" stroke-width="1" fill="none" />
<rect x="653" y="66.5" width="12.5" height="19.5" fill="#777" stroke="#c9c9c9" stroke-width="1.4"/>
<rect x="653" y="82" width="12.5" height="4.5" fill="#e0e0e0" />
<path d="M656,76 L659,73 L662,75" stroke="#ddd" stroke-width="1" fill="none" />
<path d="M674.5,66 L674.5,87" stroke="#5e5e5e" stroke-width="1" fill="none" />
<path d="M683,83 C681,78 682,70 690,68.5 C697,68 700,73 699,78 C698,83 692,85 688,84 L683,86Z" stroke="#c9c9c9" stroke-width="1.3" fill="none" />
<text x="690.5" y="81" font-size="11" fill="#c9c9c9" text-anchor="middle" font-weight="bold">?</text>
<path d="M697,67 L699,65" stroke="#c9c9c9" stroke-width="1.3" fill="none" />
<rect x="208" y="90" width="98" height="18" fill="#464646" />
<text x="212" y="101.5" font-size="8.5" fill="#757575" text-anchor="start" >lulu</text>
<path d="M291.5,95 L298.5,102 M298.5,95 L291.5,102" stroke="#c4c4c4" stroke-width="1.2" fill="none" />
<rect x="305.5" y="89.5" width="99" height="18.5" fill="#6c7699" />
<text x="310" y="101.5" font-size="8.5" fill="#c3c9de" text-anchor="start" letter-spacing="-.2">Illustration*</text>
<circle cx="393.5" cy="98" r="1.8" fill="#dfe3f0" />
<path d="M1055,98 L1058,101 L1061,98" stroke="#8a8a8a" stroke-width="1.2" fill="none" />
<rect x="4" y="85" width="37" height="592" fill="#414141" />
<rect x="29.5" y="128" width="9" height="437" fill="#565656" />
<rect x="28" y="85" width="13" height="40" fill="#3c3c3c" />
<path d="M7,90 L13,90 M7,93 L13,93 M7,96 L13,96" stroke="#666" stroke-width="1" fill="none" />
<path d="M27,101 L38,90" stroke="#cdcdcd" stroke-width="3" fill="none" />
<path d="M25,103 L27.5,100.5" stroke="#888" stroke-width="1.5" fill="none" />
<rect x="29" y="104" width="9" height="13" fill="#4a4a4a" />
<path d="M31,109 L36,112 M31,112 L36,109" stroke="#7a7a7a" stroke-width="1" fill="none" />
<path d="M31.5,615 L34,618 L36.5,615" stroke="#7a7a7a" stroke-width="1.2" fill="none" />
<circle cx="13" cy="107" r="5.5" fill="none" stroke="#cdcdcd" stroke-width="1.6"/>
<path d="M17,111 L22,116" stroke="#cdcdcd" stroke-width="2" fill="none" />
<path d="M9,140 C7,134 9,130 11,131 L12,127 L14,126 L15,127 L17,126 L18,128 L20,128 C21,133 21,138 18,141 Z" stroke="#cdcdcd" stroke-width="1" fill="#d6d6d6" />
<path d="M8,160 C6,154 9,149 14,149 C18,149 20,152 20,155" stroke="#cdcdcd" stroke-width="1.5" fill="none" />
<path d="M13,154 L13,162 M11,156 L15,156" stroke="#cdcdcd" stroke-width="1.2" fill="none" />
<path d="M17,158 L23,164 L20,164 L21,167 L19,167 L18,165 L17,167Z" stroke="#cdcdcd" stroke-width="0.8" fill="#e0e0e0" />
<path d="M15,174 L15,192 M6,183 L24,183" stroke="#cdcdcd" stroke-width="1.6" fill="none" />
<path d="M12.5,177 L15,173.5 L17.5,177Z M12.5,189 L15,192.5 L17.5,189Z M9,180.5 L5.5,183 L9,185.5Z M21,180.5 L24.5,183 L21,185.5Z" stroke="#cdcdcd" stroke-width="0.8" fill="#cdcdcd" />
<rect x="7" y="200" width="16" height="16" fill="none" stroke="#9a9a9a" stroke-width="1.3" stroke-dasharray="2.5 1.5"/>
<path d="M8,241 L15,233" stroke="#cdcdcd" stroke-width="1.8" fill="none" />
<path d="M17,224 L18,229 L23,230 L18.5,232 L18,237 L16,232.5 L11,232 L15.5,229.5Z" stroke="#cdcdcd" stroke-width="0.6" fill="#e0e0e0" />
<path d="M8,267 L9,262 L17,253 L20,256 L12,265Z" stroke="#cdcdcd" stroke-width="1.3" fill="none" />
<path d="M17,251 L22,256 M19,249 C21,247 24,250 22,252" stroke="#cdcdcd" stroke-width="2" fill="none" />
<rect x="5" y="275" width="22" height="21.5" fill="#66719a" />
<path d="M8,293 L10,286 L19,277 L24,282 L15,291Z M10,286 L15,291 M8,293 L13,288" stroke="#dfe3f2" stroke-width="1.3" fill="none" />
<path d="M7,318 L9,311 L18,300 L23,304 L14,315Z M9,311 L14,315" stroke="#cdcdcd" stroke-width="1.4" fill="none" />
<path d="M15,303 L20,308" stroke="#cdcdcd" stroke-width="1" fill="none" />
<path d="M7,344 C8,340 10,338 12,337 L19,328 C21,326 24,329 22,331 L15,340 C14,343 11,345 7,344Z" stroke="#cdcdcd" stroke-width="1.4" fill="none" />
<path d="M9,362 C10,356 20,356 21,362Z" stroke="#cdcdcd" stroke-width="1.2" fill="#d0d0d0" />
<rect x="8" y="363" width="14" height="5" fill="#bdbdbd" />
<path d="M15,356 L15,352 M13,352 L17,352" stroke="#cdcdcd" stroke-width="1.6" fill="none" />
<path d="M5,354 L8,357" stroke="#777" stroke-width="1" fill="none" />
<path d="M13,377 L13,391 M6,384 L20,384" stroke="#cdcdcd" stroke-width="1.8" fill="none" />
<circle cx="21" cy="391" r="1.6" fill="#cdcdcd" />
<path d="M6,412 L15,402 L24,408 L17,418 L10,418Z" stroke="#cdcdcd" stroke-width="1.2" fill="#d8d8d8" />
<path d="M9,414 L17,418" stroke="#4a4a4a" stroke-width="1.2" fill="none" />
<path d="M7,443 C6,437 9,432 11,429 C13,433 14,436 15,438 C16,434 18,431 20,429 C23,434 24,440 22,443Z" stroke="#8f8f8f" stroke-width="1" fill="#8a8a8a" />
<rect x="7" y="452" width="16" height="14" fill="none" stroke="#cdcdcd" stroke-width="1.5"/>
<path d="M7,459 L23,459 M13,452 L13,466 M18,452 L20,466" stroke="#cdcdcd" stroke-width="1.2" fill="none" />
<path d="M15,477 L24,486 L15,495 L6,486Z" stroke="#cdcdcd" stroke-width="1" fill="#d8d8d8" />
<path d="M9,486 C12,482 18,482 21,486" stroke="#414141" stroke-width="1.6" fill="none" />
<defs><linearGradient id="tg" x1="0" y1="0" x2="1" y2="1"><stop offset="0" stop-color="#d0d0d0"/><stop offset="1" stop-color="#4a4a4a"/></linearGradient></defs>
<rect x="7" y="502" width="16" height="16" fill="url(#tg)" stroke="#8a8a8a" stroke-width="1"/>
<path d="M6,545 C16,543 22,535 24,524" stroke="#9a9a9a" stroke-width="1.4" fill="none" />
<rect x="7" y="553" width="16" height="15" fill="none" stroke="#cdcdcd" stroke-width="1.5"/>
<path d="M7,558 L23,558 M16,558 L16,568" stroke="#cdcdcd" stroke-width="1.2" fill="none" />
<path d="M7,593 L7,578 L23,578Z" stroke="#cdcdcd" stroke-width="2" fill="none" />
<text x="15" y="621" font-size="20" fill="#d8d8d8" text-anchor="middle" >A</text>
<rect x="17.5" y="639" width="20" height="19" fill="#f98ca6" />
<rect x="4.5" y="625" width="21" height="23" fill="#7c8fb8" />
<rect x="6.5" y="627.5" width="16.5" height="17.5" fill="#f98ca6" />
<rect x="5" y="666" width="33" height="9" fill="#3c4a47" />
<rect x="5.0" y="666" width="4.2" height="4.5" fill="#f2f2f2" />
<rect x="9.2" y="670.5" width="4.2" height="4.5" fill="#f2f2f2" />
<rect x="13.4" y="666" width="4.2" height="4.5" fill="#f2f2f2" />
<rect x="17.6" y="670.5" width="4.2" height="4.5" fill="#f2f2f2" />
<rect x="21.8" y="666" width="4.2" height="4.5" fill="#f2f2f2" />
<rect x="26.0" y="670.5" width="4.2" height="4.5" fill="#f2f2f2" />
<rect x="30.200000000000003" y="666" width="4.2" height="4.5" fill="#f2f2f2" />
<rect x="34.400000000000006" y="670.5" width="4.2" height="4.5" fill="#f2f2f2" />
<rect x="42" y="85" width="164" height="18" fill="#434343" />
<rect x="42" y="103" width="164" height="150" fill="#4b4b4b" />
<rect x="44" y="86" width="13" height="15" fill="#3a3a3a" />
<path d="M47,91 L54,91 M47,94 L54,94 M47,97 L54,97" stroke="#5d5d5d" stroke-width="1" fill="none" />
<rect x="58" y="85" width="30" height="18" fill="#4b4b4b" />
<circle cx="73" cy="95.5" r="6.5" fill="none" stroke="#cdcdcd" stroke-width="1.4"/>
<circle cx="73" cy="95.5" r="2.6" fill="#cdcdcd" />
<rect x="97" y="90" width="14" height="11" fill="#5a5a5a" />
<path d="M99,93 L109,93 M99,97 L107,97" stroke="#777" stroke-width="1.2" fill="none" />
<rect x="126" y="90" width="14" height="11" fill="#5a5a5a" />
<path d="M128,93 L138,93 M128,97 L136,97" stroke="#777" stroke-width="1.2" fill="none" />
<rect x="155" y="90" width="14" height="11" fill="#5a5a5a" />
<path d="M157,93 L167,93 M157,97 L165,97" stroke="#777" stroke-width="1.2" fill="none" />
<rect x="187" y="91" width="10" height="9" fill="#5a5a5a" />
<rect x="194" y="86" width="11" height="12" fill="#555" stroke="#7a7a7a" stroke-width="1"/>
<rect x="86" y="240" width="5" height="7" fill="#8a8a8a" />
<text x="92" y="248.5" font-size="10.5" fill="#d0d0d0" text-anchor="start" >346</text>
<rect x="113" y="240" width="5" height="7" fill="#8a8a8a" />
<text x="122" y="248.5" font-size="10.5" fill="#d0d0d0" text-anchor="start" >44</text>
<rect x="138" y="240" width="5" height="7" fill="#8a8a8a" />
<text x="144" y="248.5" font-size="10.5" fill="#d0d0d0" text-anchor="start" >100</text>
<circle cx="194" cy="241" r="6.5" fill="none" stroke="#9a9a9a" stroke-width="1.3"/>
<path d="M191,238 L197,241 L191,244Z" stroke="#9a9a9a" stroke-width="1" fill="none" />
<rect x="55.5" y="223.5" width="13" height="14" fill="#f98ca6" />
<rect x="43.5" y="212.5" width="17" height="17.5" fill="#8093bd" rx="2"/>
<rect x="46" y="215" width="12" height="12.5" fill="#f98ca6" />
<rect x="44" y="240" width="24" height="9" fill="#3c4a47" />
<path d="M46,245 C49,241 52,248 55,244 C58,241 61,248 66,243" stroke="#f4f4f4" stroke-width="2" fill="none" />
<rect x="42" y="255" width="164" height="21" fill="#3e3e3e" />
<rect x="44" y="258" width="12" height="14" fill="#383838" />
<path d="M47,262 L53,262 M47,265 L53,265 M47,268 L53,268" stroke="#5a5a5a" stroke-width="1" fill="none" />
<rect x="58" y="256" width="30" height="20" fill="#474747" />
<path d="M68,271 L79,260 M66,273 L72,271" stroke="#8a8a8a" stroke-width="1.5" fill="none" />
<rect x="90" y="256" width="102" height="20" fill="#4a4a4a" />
<path d="M97,272 L109,259" stroke="#cdcdcd" stroke-width="2.2" fill="none" />
<path d="M104,272 L110,266 L112,272Z" stroke="#bdbdbd" stroke-width="0.5" fill="#bdbdbd" />
<text x="118" y="270" font-size="8.5" fill="#b8b8b8" text-anchor="start" letter-spacing="-.3">Brush size: G-pen</text>
<rect x="43" y="277" width="151" height="170" fill="#3d3d3d" />
<rect x="72.5" y="277" width="1" height="170" fill="#444" />
<rect x="102.5" y="277" width="1" height="170" fill="#444" />
<rect x="132.5" y="277" width="1" height="170" fill="#444" />
<rect x="162.5" y="277" width="1" height="170" fill="#444" />
<rect x="43" y="316" width="151" height="1" fill="#474747" />
<rect x="195" y="277" width="10" height="170" fill="#474747" />
<rect x="196" y="290" width="8" height="74" fill="#5c5c5c" />
<path d="M198,284 L200,282 L202,284" stroke="#888" stroke-width="1" fill="none" />
<path d="M198,438 L200,440 L202,438" stroke="#888" stroke-width="1" fill="none" />
<rect x="43.5" y="397" width="29" height="36.5" fill="#66719a" />
<circle cx="57.5" cy="291" r="0.35" fill="#9a9a9a" />
<circle cx="87.5" cy="291" r="0.5" fill="#9a9a9a" />
<circle cx="117.5" cy="291" r="0.6" fill="#9a9a9a" />
<circle cx="148" cy="291" r="0.7" fill="#9a9a9a" />
<circle cx="178" cy="291" r="0.8" fill="#9a9a9a" />
<circle cx="57.5" cy="332" r="0.9" fill="#e0e0e0" />
<circle cx="87.5" cy="332" r="1.2" fill="#e0e0e0" />
<circle cx="117.5" cy="332" r="1.5" fill="#e0e0e0" />
<circle cx="148" cy="332" r="1.8" fill="#e0e0e0" />
<circle cx="178" cy="332" r="2.2" fill="#e0e0e0" />
<circle cx="57.5" cy="371.5" r="2.4" fill="#f4f4f4" />
<circle cx="87.5" cy="371.5" r="2.9" fill="#f4f4f4" />
<circle cx="117.5" cy="371.5" r="3.5" fill="#f4f4f4" />
<circle cx="148" cy="371.5" r="4.3" fill="#f4f4f4" />
<circle cx="178" cy="371.5" r="5.2" fill="#f4f4f4" />
<circle cx="57.5" cy="410.5" r="6" fill="#f4f4f4" />
<circle cx="87.5" cy="410.5" r="7.8" fill="#f4f4f4" />
<circle cx="117.5" cy="410.5" r="9.2" fill="#f4f4f4" />
<circle cx="148" cy="408.5" r="11.5" fill="#f4f4f4" />
<circle cx="178" cy="408.5" r="12" fill="#f4f4f4" />
<text x="57.5" y="312" font-size="11" fill="#d2d2d2" text-anchor="middle" letter-spacing="-.2">0.7</text>
<text x="87.5" y="312" font-size="11" fill="#d2d2d2" text-anchor="middle" letter-spacing="-.2">1</text>
<text x="117.5" y="312" font-size="11" fill="#d2d2d2" text-anchor="middle" letter-spacing="-.2">1.5</text>
<text x="148" y="312" font-size="11" fill="#d2d2d2" text-anchor="middle" letter-spacing="-.2">2</text>
<text x="178" y="312" font-size="11" fill="#d2d2d2" text-anchor="middle" letter-spacing="-.2">2.5</text>
<text x="57.5" y="351.5" font-size="11" fill="#d2d2d2" text-anchor="middle" letter-spacing="-.2">3</text>
<text x="87.5" y="351.5" font-size="11" fill="#d2d2d2" text-anchor="middle" letter-spacing="-.2">4</text>
<text x="117.5" y="351.5" font-size="11" fill="#d2d2d2" text-anchor="middle" letter-spacing="-.2">5</text>
<text x="148" y="351.5" font-size="11" fill="#d2d2d2" text-anchor="middle" letter-spacing="-.2">6</text>
<text x="178" y="351.5" font-size="11" fill="#d2d2d2" text-anchor="middle" letter-spacing="-.2">7</text>
<text x="57.5" y="391" font-size="11" fill="#d2d2d2" text-anchor="middle" letter-spacing="-.2">8</text>
<text x="87.5" y="391" font-size="11" fill="#d2d2d2" text-anchor="middle" letter-spacing="-.2">10</text>
<text x="117.5" y="391" font-size="11" fill="#d2d2d2" text-anchor="middle" letter-spacing="-.2">12</text>
<text x="148" y="391" font-size="11" fill="#d2d2d2" text-anchor="middle" letter-spacing="-.2">15</text>
<text x="178" y="391" font-size="11" fill="#d2d2d2" text-anchor="middle" letter-spacing="-.2">17</text>
<text x="57.5" y="430" font-size="11" fill="#d2d2d2" text-anchor="middle" letter-spacing="-.2">20</text>
<text x="87.5" y="430" font-size="11" fill="#d2d2d2" text-anchor="middle" letter-spacing="-.2">25</text>
<text x="117.5" y="430" font-size="11" fill="#d2d2d2" text-anchor="middle" letter-spacing="-.2">30</text>
<text x="148" y="430" font-size="11" fill="#d2d2d2" text-anchor="middle" letter-spacing="-.2">40</text>
<text x="178" y="430" font-size="11" fill="#d2d2d2" text-anchor="middle" letter-spacing="-.2">50</text>
<clipPath id="gcl"><rect x="43" y="277" width="151" height="169.5"/></clipPath><g clip-path="url(#gcl)">
<circle cx="57.5" cy="457" r="17" fill="#f4f4f4" />
<circle cx="87.5" cy="457" r="17" fill="#f4f4f4" />
<circle cx="117.5" cy="457" r="17" fill="#f4f4f4" />
<circle cx="148" cy="457" r="17" fill="#f4f4f4" />
<circle cx="178" cy="457" r="17" fill="#f4f4f4" />
</g>
<rect x="42" y="449" width="164" height="20" fill="#3e3e3e" />
<rect x="44" y="452" width="12" height="13" fill="#383838" />
<rect x="58" y="450" width="78" height="19" fill="#4a4a4a" />
<path d="M68,466 L79,454" stroke="#cdcdcd" stroke-width="2" fill="none" />
<path d="M74,466 L80,460 L82,466Z" stroke="#bdbdbd" stroke-width="0.5" fill="#bdbdbd" />
<text x="87" y="463" font-size="8.5" fill="#b8b8b8" text-anchor="start" letter-spacing="-.3">Sub Tool: Pen</text>
<rect x="43" y="471" width="80" height="22.5" fill="#66719a" />
<rect x="127" y="471" width="78" height="22.5" fill="#4f4f4f" />
<path d="M48,490 L50,484 L58,475 L62,479 L54,488Z M50,484 L54,488" stroke="#dfe3f2" stroke-width="1.2" fill="none" />
<text x="68" y="487" font-size="11.5" fill="#e4e7f2" text-anchor="start" >Pen</text>
<path d="M133,490 L135,483 L143,474 L148,478 L140,488Z" stroke="#cdcdcd" stroke-width="1.2" fill="#9a9a9a" />
<text x="151" y="487" font-size="11.5" fill="#d6d6d6" text-anchor="start" >Marker</text>
<rect x="43" y="497" width="151" height="157" fill="#3b3b3b" />
<rect x="43" y="498" width="150" height="25" fill="#66719a" />
<rect x="43" y="523.5" width="150" height="1" fill="#333" />
<rect x="43" y="549.5" width="150" height="1" fill="#333" />
<rect x="43" y="575.5" width="150" height="1" fill="#333" />
<rect x="43" y="601.5" width="150" height="1" fill="#333" />
<rect x="43" y="627.5" width="150" height="1" fill="#333" />
<rect x="195" y="497" width="10" height="158" fill="#474747" />
<rect x="196" y="510" width="8" height="78" fill="#5c5c5c" />
<path d="M198,503 L200,501 L202,503" stroke="#888" stroke-width="1" fill="none" />
<path d="M198,648 L200,650 L202,648" stroke="#888" stroke-width="1" fill="none" />
<path d="M58.0,513.0 C72.4,504.0 91.6,502.0 106.0,508.5 C120.4,514.0 139.6,514.0 154.0,507.5 C139.6,517.8 123.3,521.5 106.0,516.0 C91.6,508.8 72.4,506.2 58.0,513.0 Z" fill="#f4f4f4"/>
<path d="M62.0,537.0 C74.3,528.9 90.7,527.1 103.0,533.0 C115.3,537.9 131.7,537.9 144.0,532.0 C131.7,540.4 117.8,542.9 103.0,538.0 C90.7,531.6 74.3,530.4 62.0,537.0 Z" fill="#f4f4f4"/>
<path d="M62.0,563.0 C74.0,554.9 90.0,553.1 102.0,559.0 C114.0,563.9 130.0,563.9 142.0,558.0 C130.0,566.2 116.4,568.5 102.0,563.6 C90.0,557.2 74.0,556.3 62.0,563.0 Z" fill="#f4f4f4"/>
<path d="M58.0,591.0 C71.8,582.0 90.2,580.0 104.0,586.5 C117.8,592.0 136.2,592.0 150.0,585.5 C136.2,595.0 120.6,598.0 104.0,592.5 C90.2,585.4 71.8,583.8 58.0,591.0 Z" fill="#f4f4f4"/>
<path d="M52.0,619.0 C68.2,608.2 89.8,605.8 106.0,613.6 C122.2,620.2 143.8,620.2 160.0,612.4 C143.8,624.2 125.4,628.2 106.0,621.6 C89.8,613.0 68.2,610.6 52.0,619.0 Z" fill="#f4f4f4"/>
<path d="M58.0,644.0 C71.8,635.0 90.2,633.0 104.0,639.5 C117.8,645.0 136.2,645.0 150.0,638.5 C136.2,648.0 120.6,651.0 104.0,645.5 C90.2,638.4 71.8,636.8 58.0,644.0 Z" fill="#f4f4f4"/>
<text x="191.5" y="518" font-size="11" fill="#d8d8d8" text-anchor="end" letter-spacing="-.2" paint-order="stroke" stroke="#3b3b3b" stroke-width="0">G-pen</text>
<text x="191.5" y="545" font-size="11" fill="#d8d8d8" text-anchor="end" letter-spacing="-.2" paint-order="stroke" stroke="#3b3b3b" stroke-width="2">Real G-Pen</text>
<text x="191.5" y="571" font-size="11" fill="#d8d8d8" text-anchor="end" letter-spacing="-.2" paint-order="stroke" stroke="#3b3b3b" stroke-width="2">Mapping pen</text>
<text x="191.5" y="597.5" font-size="11" fill="#d8d8d8" text-anchor="end" letter-spacing="-.2" paint-order="stroke" stroke="#3b3b3b" stroke-width="2">Turnip pen</text>
<text x="191.5" y="623.5" font-size="11" fill="#d8d8d8" text-anchor="end" letter-spacing="-.2" paint-order="stroke" stroke="#3b3b3b" stroke-width="2">Calligraphy</text>
<text x="191.5" y="649.5" font-size="11" fill="#d8d8d8" text-anchor="end" letter-spacing="-.2" paint-order="stroke" stroke="#3b3b3b" stroke-width="2">Textured pen</text>
<rect x="42" y="656" width="164" height="21" fill="#3e3e3e" />
<rect x="151" y="661" width="10" height="11" fill="none" stroke="#8a8a8a" stroke-width="1.1"/>
<rect x="171" y="661" width="10" height="11" fill="none" stroke="#8a8a8a" stroke-width="1.1"/>
<rect x="191" y="661" width="10" height="11" fill="none" stroke="#8a8a8a" stroke-width="1.1"/>
<path d="M156,664 L156,669 M154,667 L156,669 L158,667" stroke="#8a8a8a" stroke-width="1" fill="none" />
<path d="M174,667 L178,667 M176,665 L176,669" stroke="#8a8a8a" stroke-width="1" fill="none" />
<path d="M192,661 L200,661" stroke="#8a8a8a" stroke-width="1.6" fill="none" />
<rect x="1065" y="63" width="196" height="22" fill="#3a3a3a" />
<path d="M1074,69.5 L1070.5,73 L1074,76.5 M1078.5,69.5 L1075,73 L1078.5,76.5" stroke="#7a7a7a" stroke-width="1.2" fill="none" />
<circle cx="1085" cy="68" r="0.9" fill="#5c5c5c" />
<circle cx="1087.5" cy="68" r="0.9" fill="#5c5c5c" />
<circle cx="1085" cy="71.5" r="0.9" fill="#5c5c5c" />
<circle cx="1087.5" cy="71.5" r="0.9" fill="#5c5c5c" />
<circle cx="1085" cy="75" r="0.9" fill="#5c5c5c" />
<circle cx="1087.5" cy="75" r="0.9" fill="#5c5c5c" />
<circle cx="1085" cy="78.5" r="0.9" fill="#5c5c5c" />
<circle cx="1087.5" cy="78.5" r="0.9" fill="#5c5c5c" />
<path d="M1228,70 L1231,73 L1228,76" stroke="#5f5f5f" stroke-width="1.2" fill="none" />
<path d="M1250,69.5 L1253.5,73 L1250,76.5 M1254.5,69.5 L1258,73 L1254.5,76.5" stroke="#5f5f5f" stroke-width="1.2" fill="none" />
<rect x="1065" y="85" width="196" height="592" fill="#3a3a3a" />
<rect x="1086" y="85" width="175" height="592" fill="#3c3c3c" />
<rect x="1080" y="85" width="181" height="21" fill="#3d3d3d" />
<path d="M1087,90 L1092,90 M1087,93 L1092,93 M1087,96 L1092,96" stroke="#666" stroke-width="1" fill="none" />
<rect x="1098" y="86" width="75" height="20" fill="#494949" />
<rect x="1104" y="89" width="14" height="13" rx="3" fill="#8a8a8a" stroke="#a8a8a8" stroke-width="1"/>
<path d="M1106,96 L1116,96 M1111,91 L1111,101" stroke="#666" stroke-width="1" fill="none" />
<text x="1125" y="98.5" font-size="8.5" fill="#b5b5b5" text-anchor="start" letter-spacing="-.3">Navigator</text>
<rect x="1179" y="89" width="13" height="11" fill="#505050" stroke="#666" stroke-width="1"/>
<rect x="1207" y="89" width="13" height="11" fill="#505050" stroke="#666" stroke-width="1"/>
<rect x="1234" y="89" width="13" height="11" fill="#505050" stroke="#666" stroke-width="1"/>
<rect x="1080.5" y="107" width="180.5" height="100.5" fill="#ffffff" />
<use href="#doodles" transform="translate(1080.5 107) scale(0.2135) translate(-214 -132)"/>
<rect x="1080" y="208" width="181" height="45" fill="#3a3a3a" />
<rect x="1083" y="213" width="37" height="16" fill="#2c2c2c" />
<text x="1085" y="226" font-size="10.5" fill="#c9c9c9" text-anchor="start" letter-spacing="-.3">66.0</text>
<rect x="1105" y="219" width="14" height="5" fill="#555" />
<rect x="1120" y="212" width="2" height="18" fill="#6a6a6a" />
<rect x="1124" y="213" width="32" height="16" fill="#2a2a2a" />
<path d="M1125,222 C1135,216 1148,216 1155,216 L1155,228 L1125,228Z" stroke="#3c3c3c" stroke-width="0" fill="#3c3c3c" />
<circle cx="1168.5" cy="221" r="7" fill="none" stroke="#9a9a9a" stroke-width="1.3"/>
<circle cx="1188.5" cy="221" r="7" fill="none" stroke="#9a9a9a" stroke-width="1.3"/>
<circle cx="1208.5" cy="221" r="7" fill="none" stroke="#9a9a9a" stroke-width="1.3"/>
<path d="M1165,221 L1172,221" stroke="#9a9a9a" stroke-width="1.2" fill="none" />
<path d="M1185,221 L1192,221 M1188.5,217.5 L1188.5,224.5" stroke="#9a9a9a" stroke-width="1.2" fill="none" />
<rect x="1205.5" y="218" width="6" height="6" fill="#b5b5b5" />
<rect x="1225" y="215" width="7" height="7" fill="none" stroke="#9a9a9a" stroke-width="1.2"/><rect x="1229" y="219" width="7" height="7" fill="#5c5c5c" stroke="#9a9a9a" stroke-width="1.2"/>
<rect x="1244" y="214.5" width="12" height="12" fill="none" stroke="#9a9a9a" stroke-width="1.3"/>
<path d="M1246,224.5 L1254,216.5" stroke="#9a9a9a" stroke-width="1.3" fill="none" />
<rect x="1083" y="233" width="37" height="16" fill="#2c2c2c" />
<text x="1088" y="246" font-size="10.5" fill="#c9c9c9" text-anchor="start" letter-spacing="-.3">0.0</text>
<rect x="1120" y="232" width="2" height="18" fill="#6a6a6a" />
<rect x="1124" y="233" width="32" height="16" fill="#2a2a2a" />
<path d="M1125,248 C1128,238 1150,238 1155,248Z" stroke="#3c3c3c" stroke-width="0" fill="#3c3c3c" />
<path d="M1163,238 C1166,234 1173,236 1174,241 C1175,246 1170,249 1166,247" stroke="#a8a8a8" stroke-width="1.4" fill="none" />
<path d="M1162,234 L1162,239 L1167,239" stroke="#a8a8a8" stroke-width="1.3" fill="none" />
<path d="M1194,238 C1191,234 1184,236 1183,241 C1182,246 1187,249 1191,247" stroke="#a8a8a8" stroke-width="1.4" fill="none" />
<path d="M1195,234 L1195,239 L1190,239" stroke="#a8a8a8" stroke-width="1.3" fill="none" />
<circle cx="1208.5" cy="241.5" r="6.5" fill="none" stroke="#a8a8a8" stroke-width="1.3"/>
<path d="M1208.5,237 L1208.5,242" stroke="#a8a8a8" stroke-width="1.3" fill="none" />
<path d="M1224,236 L1229,241.5 L1224,247Z M1237,236 L1232,241.5 L1237,247Z" stroke="#a8a8a8" stroke-width="1" fill="#8a8a8a" />
<path d="M1230.5,234 L1230.5,249" stroke="#a8a8a8" stroke-width="1" fill="none" />
<path d="M1245,235 L1250.5,240 L1256,235Z M1245,248 L1250.5,243 L1256,248Z" stroke="#a8a8a8" stroke-width="1" fill="#8a8a8a" />
<path d="M1243,241.5 L1258,241.5" stroke="#a8a8a8" stroke-width="1" fill="none" />
<rect x="1080" y="254" width="181" height="20" fill="#3d3d3d" />
<path d="M1087,259 L1092,259 M1087,262 L1092,262 M1087,265 L1092,265" stroke="#666" stroke-width="1" fill="none" />
<rect x="1098" y="255" width="98" height="19" fill="#494949" />
<path d="M1104,268 L1104,262 L1110,258 L1116,262 L1116,268 L1110,271Z M1104,262 L1110,265 L1116,262" stroke="#c4c4c4" stroke-width="1.2" fill="none" />
<circle cx="1116" cy="269" r="3.2" fill="none" stroke="#bdbdbd" stroke-width="1"/>
<text x="1126" y="268" font-size="8.5" fill="#b5b5b5" text-anchor="start" letter-spacing="-.3">Layer Property</text>
<rect x="1198" y="258" width="13" height="11" rx="3" fill="#505050" stroke="#686868" stroke-width="1"/>
<rect x="1228" y="258" width="13" height="11" rx="3" fill="#505050" stroke="#686868" stroke-width="1"/>
<rect x="1080" y="274" width="181" height="97" fill="#3b3b3b" />
<text x="1089" y="288" font-size="10.5" fill="#cfcfcf" text-anchor="start" letter-spacing="-.2">Effect</text>
<rect x="1121" y="284" width="126" height="1" fill="#555" />
<rect x="1171" y="289.5" width="77" height="21" fill="#505050" rx="2"/>
<circle cx="1182" cy="300" r="5.5" fill="none" stroke="#bdbdbd" stroke-width="1.3"/>
<circle cx="1196" cy="296" r="1.2" fill="#bdbdbd" />
<circle cx="1196" cy="300" r="1.2" fill="#bdbdbd" />
<circle cx="1196" cy="304" r="1.2" fill="#bdbdbd" />
<circle cx="1200" cy="296" r="1.2" fill="#bdbdbd" />
<circle cx="1200" cy="300" r="1.2" fill="#bdbdbd" />
<circle cx="1200" cy="304" r="1.2" fill="#bdbdbd" />
<circle cx="1204" cy="296" r="1.2" fill="#bdbdbd" />
<circle cx="1204" cy="300" r="1.2" fill="#bdbdbd" />
<circle cx="1204" cy="304" r="1.2" fill="#bdbdbd" />
<rect x="1215" y="294.5" width="9" height="9" rx="2" fill="#8a8a8a" stroke="#bdbdbd" stroke-width="1"/><rect x="1218" y="297.5" width="9" height="9" rx="2" fill="#777" stroke="#bdbdbd" stroke-width="1"/>
<path d="M1236,298 L1239.5,301.5 L1243,298" stroke="#d0d0d0" stroke-width="1.4" fill="none" />
<text x="1089" y="325" font-size="10.5" fill="#cfcfcf" text-anchor="start" letter-spacing="-.2">Expression color</text>
<rect x="1170" y="320.5" width="77" height="1" fill="#555" />
<rect x="1096" y="330.5" width="100" height="20" fill="#4f4f4f" rx="2"/>
<circle cx="1122" cy="337" r="3.6" fill="#e05a5a" />
<circle cx="1119" cy="342" r="3.6" fill="#4fc26a" />
<circle cx="1125" cy="342" r="3.6" fill="#4a8be0" />
<text x="1136" y="344.5" font-size="11" fill="#d8d8d8" text-anchor="start" letter-spacing="-.2">Color</text>
<path d="M1183,338.5 L1186.5,342 L1190,338.5" stroke="#d0d0d0" stroke-width="1.4" fill="none" />
<rect x="1080" y="373" width="181" height="19" fill="#3d3d3d" />
<path d="M1087,378 L1092,378 M1087,381 L1092,381 M1087,384 L1092,384" stroke="#666" stroke-width="1" fill="none" />
<rect x="1098" y="374" width="52" height="18" fill="#494949" />
<path d="M1105,386 L1105,380 L1111,377 L1117,380 L1117,386 L1111,389Z M1105,380 L1111,383 L1117,380" stroke="#c4c4c4" stroke-width="1.2" fill="none" />
<text x="1127" y="387" font-size="8.5" fill="#b5b5b5" text-anchor="start" letter-spacing="-.3">Layer</text>
<rect x="1158" y="377" width="17" height="11" rx="3" fill="#4c4c4c" stroke="#626262" stroke-width="1"/>
<rect x="1188" y="377" width="17" height="11" rx="3" fill="#4c4c4c" stroke="#626262" stroke-width="1"/>
<rect x="1080" y="393" width="181" height="22" fill="#3f3f3f" />
<rect x="1081" y="394.5" width="40" height="19.5" fill="#545454" rx="2"/>
<rect x="1087" y="398" width="13" height="12" rx="2" fill="none" stroke="#7d7d7d" stroke-width="1.2"/>
<path d="M1107,402 L1110,405 L1113,402" stroke="#9a9a9a" stroke-width="1.2" fill="none" />
<rect x="1123" y="394.5" width="47.5" height="19.5" fill="#545454" rx="2"/>
<text x="1126" y="408" font-size="9.5" fill="#c6c6c6" text-anchor="start" letter-spacing="-.4">Normal</text>
<path d="M1160,402 L1163,405 L1166,402" stroke="#b5b5b5" stroke-width="1.2" fill="none" />
<rect x="1175.5" y="399" width="46" height="9.5" fill="#f0f0f0" />
<rect x="1176" y="403" width="45" height="2" fill="#bdbdbd" />
<rect x="1221" y="395" width="2" height="18" fill="#6a6a6a" />
<text x="1228" y="408.5" font-size="10.5" fill="#d6d6d6" text-anchor="start" letter-spacing="-.3">100</text>
<path d="M1249.5,402 L1252,399 L1254.5,402 M1249.5,406 L1252,409 L1254.5,406" stroke="#b5b5b5" stroke-width="1.1" fill="none" />
<rect x="1080" y="415" width="181" height="21" fill="#3b3b3b" />
<rect x="1099" y="419" width="8" height="8" fill="#8a8a8a" stroke="#bdbdbd" stroke-width="1"/><rect x="1102" y="422" width="8" height="8" fill="#6a6a6a" stroke="#bdbdbd" stroke-width="1"/>
<path d="M1119,421 L1131,421 M1125,419 L1125,431 M1121,425 L1129,425" stroke="#c4c4c4" stroke-width="1.5" fill="none" />
<path d="M1138,419 L1138,429 M1136,421 L1140,421 M1141,427 L1145,431 L1143,431" stroke="#c4c4c4" stroke-width="1.3" fill="none" />
<rect x="1160" y="424" width="9" height="7" fill="#c4c4c4" />
<path d="M1162,424 L1162,421 C1162,418 1167,418 1167,421 L1167,424" stroke="#c4c4c4" stroke-width="1.3" fill="none" />
<rect x="1180" y="419" width="3" height="3" fill="#c4c4c4" />
<rect x="1184" y="419" width="3" height="3" fill="#c4c4c4" />
<rect x="1188" y="419" width="3" height="3" fill="#c4c4c4" />
<rect x="1180" y="423" width="3" height="3" fill="#c4c4c4" />
<rect x="1188" y="423" width="3" height="3" fill="#c4c4c4" />
<rect x="1180" y="427" width="3" height="3" fill="#c4c4c4" />
<rect x="1184" y="427" width="3" height="3" fill="#c4c4c4" />
<rect x="1203" y="419" width="11" height="11" fill="none" stroke="#6a6a6a" stroke-width="1.2"/>
<path d="M1216,424 L1218.5,426.5 L1221,424" stroke="#6a6a6a" stroke-width="1.1" fill="none" />
<rect x="1235" y="419" width="11" height="11" fill="none" stroke="#6a6a6a" stroke-width="1.2"/>
<path d="M1235,430 L1246,419" stroke="#6a6a6a" stroke-width="1.1" fill="none" />
<path d="M1248,424 L1250.5,426.5 L1253,424" stroke="#6a6a6a" stroke-width="1.1" fill="none" />
<rect x="1080" y="436" width="181" height="22" fill="#3b3b3b" />
<rect x="1084" y="440" width="12" height="12" fill="none" stroke="#bdbdbd" stroke-width="1.3"/>
<path d="M1084,446 L1096,446" stroke="#bdbdbd" stroke-width="1.3" fill="none" />
<rect x="1105" y="440" width="12" height="12" rx="2" fill="none" stroke="#bdbdbd" stroke-width="1.3"/>
<circle cx="1117" cy="452" r="2.6" fill="none" stroke="#bdbdbd" stroke-width="1"/>
<rect x="1124" y="440" width="12" height="12" rx="2" fill="#6a6a6a" stroke="#bdbdbd" stroke-width="1.2"/>
<circle cx="1136" cy="452" r="2.6" fill="none" stroke="#bdbdbd" stroke-width="1"/>
<path d="M1145,452 L1145,441 L1150,441 L1151.5,443 L1158,443 L1158,452Z" stroke="#bdbdbd" stroke-width="1.1" fill="#8a8a8a" />
<circle cx="1158" cy="452" r="2.6" fill="none" stroke="#bdbdbd" stroke-width="1"/>
<rect x="1166" y="441" width="10" height="11" fill="#4a4a4a" />
<rect x="1184" y="444" width="8" height="8" fill="none" stroke="#bdbdbd" stroke-width="1.2"/><rect x="1188" y="440" width="8" height="8" fill="#3b3b3b" stroke="#bdbdbd" stroke-width="1.2"/>
<rect x="1205.5" y="440" width="12" height="12" fill="#e6e6e6" rx="2"/>
<circle cx="1211.5" cy="446" r="3" fill="#3b3b3b" />
<rect x="1227" y="443" width="10" height="8" fill="none" stroke="#707070" stroke-width="1.1"/>
<path d="M1246,443 L1256,443 M1247.5,443 L1248,453 L1254,453 L1254.5,443 M1249,441 L1253,441" stroke="#a8a8a8" stroke-width="1.2" fill="none" />
<rect x="1080" y="458.5" width="181" height="33" fill="#3a3a3a" />
<rect x="1101" y="458.5" width="1" height="66" fill="#2c2c2c" />
<rect x="1119" y="458.5" width="1" height="66" fill="#2c2c2c" />
<rect x="1120" y="459" width="128.5" height="32" fill="#5b6586" />
<path d="M1084,475 C1087,470.5 1093,470.5 1096,475 C1093,479.5 1087,479.5 1084,475Z" stroke="#cfcfcf" stroke-width="0.5" fill="#d8d8d8" />
<circle cx="1090" cy="475" r="2.1" fill="#4a4a4a" />
<path d="M1104,482 L1106,477 L1114,468 L1116,470 L1108,480Z" stroke="#d0d0d0" stroke-width="1" fill="none" />
<path d="M1103,483.5 L1117,483.5" stroke="#d0d0d0" stroke-width="1" fill="none" />
<rect x="1125" y="464.5" width="26.5" height="22" fill="#2e2e2e" stroke="#e6e6e6" stroke-width="1.5"/>
<rect x="1128.5" y="469" width="19.5" height="12.5" fill="#ffffff" />
<path d="M1131,472 C1133,471 1134,474 1136,472 M1139,472 C1141,471 1142,474 1144,472 M1131,477 C1135,476 1140,478 1145,477" stroke="#f4b6c4" stroke-width="1" fill="none" />
<text x="1157.5" y="473" font-size="10" fill="#d4d8e6" text-anchor="start" letter-spacing="-.35">100 % Normal</text>
<text x="1157.5" y="486" font-size="10" fill="#d4d8e6" text-anchor="start" letter-spacing="-.3">Layer 1</text>
<rect x="1080" y="491.5" width="181" height="33" fill="#3a3a3a" />
<rect x="1080" y="491" width="181" height="1" fill="#2c2c2c" />
<rect x="1080" y="524" width="181" height="1" fill="#2c2c2c" />
<rect x="1101" y="491.5" width="1" height="33" fill="#2c2c2c" />
<rect x="1119" y="491.5" width="1" height="33" fill="#2c2c2c" />
<path d="M1084,508 C1087,503.5 1093,503.5 1096,508 C1093,512.5 1087,512.5 1084,508Z" stroke="#cfcfcf" stroke-width="0.5" fill="#d8d8d8" />
<circle cx="1090" cy="508" r="2.1" fill="#4a4a4a" />
<rect x="1127" y="501.5" width="20.5" height="15" fill="#fbfbfb" />
<rect x="1161" y="495" width="17" height="18" fill="#f0f0f0" stroke="#f8f8f8" stroke-width="1"/>
<path d="M1165,499 L1165,508 L1171,508 L1171,500" stroke="#555" stroke-width="1.2" fill="none" />
<text x="1181.5" y="519.5" font-size="10" fill="#cfcfcf" text-anchor="start" letter-spacing="-.3">Paper</text>
<rect x="1248.5" y="458.5" width="12.5" height="66" fill="#3a3a3a" />
<rect x="208" y="623" width="857" height="14" fill="#3e3e3e" />
<text x="209" y="636" font-size="10.5" fill="#c6c6c6" text-anchor="start" letter-spacing="-.3">66.0</text>
<rect x="232" y="628" width="28" height="8" fill="#2e2e2e" />
<rect x="259.5" y="625" width="2" height="13" fill="#707070" />
<rect x="263" y="626" width="43" height="12" fill="#2d2d2d" />
<path d="M312,632 L320,632" stroke="#8a8a8a" stroke-width="1.4" fill="none" />
<path d="M332,632 L340,632 M336,628 L336,636" stroke="#8a8a8a" stroke-width="1.4" fill="none" />
<rect x="351.5" y="628.5" width="7" height="7" fill="#bdbdbd" />
<rect x="366" y="625" width="48" height="13" fill="#2d2d2d" />
<text x="370" y="636" font-size="10.5" fill="#c6c6c6" text-anchor="start" letter-spacing="-.3">0.0</text>
<rect x="413" y="625" width="2" height="13" fill="#707070" />
<rect x="416" y="626" width="48" height="12" fill="#2d2d2d" />
<path d="M418,637 C428,627 450,627 462,637Z" stroke="#3c3c3c" stroke-width="0" fill="#3c3c3c" />
<path d="M471,634 C471,628 479,628 479,634" stroke="#8a8a8a" stroke-width="1.3" fill="none" />
<path d="M489,634 C489,628 497,628 497,634" stroke="#8a8a8a" stroke-width="1.3" fill="none" />
<circle cx="513" cy="631.5" r="4" fill="none" stroke="#8a8a8a" stroke-width="1.2"/>
<rect x="526" y="628" width="7" height="7" fill="#5c5c5c" />
<rect x="540" y="624" width="515" height="12" fill="#454545" />
<rect x="688" y="626" width="200" height="8" fill="#5e5e5e" rx="2"/>
<path d="M1047,630 L1050,633 L1047,636" stroke="#8a8a8a" stroke-width="1" fill="none" />
<rect x="1042" y="624" width="23" height="12" fill="#4d4d4d" />
<rect x="1055" y="108" width="10" height="515" fill="#454545" />
<rect x="1056.5" y="268" width="7" height="200" fill="#5e5e5e" rx="2"/>
<path d="M1057,117 L1060,114 L1063,117" stroke="#8a8a8a" stroke-width="1.1" fill="none" />
<path d="M1057,612 L1060,615 L1063,612" stroke="#8a8a8a" stroke-width="1.1" fill="none" />
<rect x="208" y="637" width="857" height="40" fill="#3a3a3a" />
<rect x="230" y="643" width="38" height="29" fill="#484848" />
<rect x="242" y="650" width="14" height="14" rx="1" fill="none" stroke="#b5b5b5" stroke-width="1.3"/>
<path d="M249,650 L249,664" stroke="#b5b5b5" stroke-width="1" fill="none" />
<circle cx="249" cy="654" r="1.1" fill="#b5b5b5" />
<circle cx="249" cy="660" r="1.1" fill="#b5b5b5" />
<path d="M214,645 L220,645" stroke="#5a5a5a" stroke-width="1.2" fill="none" />
<path d="M216,666 L218.5,668.5 L221,666 M216,669 L218.5,671.5 L221,669" stroke="#6a6a6a" stroke-width="1" fill="none" />
</svg>
<div id="wheel" style="left:54.7px;top:89.6px;width:131px;height:131px;border-radius:50%;background:conic-gradient(from 300deg,#ff0000,#ffff00,#00ff00,#00ffff,#0000ff,#ff00ff,#ff0000);-webkit-mask:radial-gradient(circle closest-side,transparent 53.5px,#000 54.5px,#000 64.8px,transparent 65.6px);mask:radial-gradient(circle closest-side,transparent 53.5px,#000 54.5px,#000 64.8px,transparent 65.6px)"></div>
<div id="svsq" style="left:86.7px;top:121.5px;width:67.3px;height:68px;background:linear-gradient(to bottom,rgba(0,0,0,0),#000),linear-gradient(to right,#fff,#f0104a)"></div>
<div style="left:112.5px;top:117.5px;width:8px;height:8px;border-radius:50%;border:1.6px solid #e8e8e8;box-shadow:0 0 0 1px #444 inset"></div>
<div style="left:57px;top:133.5px;width:9.5px;height:9.5px;border:2px solid #fff;transform:rotate(-20deg);box-shadow:0 0 0 1px #333"></div>

</div>
<!--CHAT-->
<div class="bub" style="top:118px;left:1316px;height:76px"><div class="nm">Grieferim</div><div class="msg" id="m1">Your eggex-Cute badum tsss <svg style="left:227px" width="20" height="20" viewBox="0 0 20 20"><circle cx="10" cy="10" r="9" fill="#f9b53a"/><circle cx="10" cy="9" r="7.5" fill="#fdd05a"/><path d="M4.5,10.5 H15.5 C15.5,15 12.5,16.5 10,16.5 C7.5,16.5 4.5,15 4.5,10.5Z" fill="#fff" stroke="#a86a1a" stroke-width=".8"/><path d="M5.5,7 q1.5,-2 3,0 M11.5,7 q1.5,-2 3,0" stroke="#7a4a12" stroke-width="1.1" fill="none"/></svg></div></div>
<div class="bub" style="top:208px;left:1342px"><div class="nm">Expletive</div><div class="msg" id="m2">Do you remember f, q, and z?</div></div>
<div class="bub" style="top:296px;left:1390px"><div class="nm">Expletive</div><div class="msg" id="m3">thanks for the popping</div></div>
<div class="bub" style="top:383px;left:1390px"><div class="nm">Expletive</div><div class="msg" id="m4">Add a headphone dent</div></div>
<!--AVATAR-->
<svg id="avatar" viewBox="0 0 1592 876">
<defs>
<filter id="soft" x="-5%" y="-5%" width="110%" height="110%"><feGaussianBlur stdDeviation="0.8"/></filter>
<filter id="soft2" x="-10%" y="-10%" width="120%" height="120%"><feGaussianBlur stdDeviation="2.2"/></filter>
<linearGradient id="hairG" x1="0" y1="0" x2="0" y2="1"><stop offset="0" stop-color="#d9d6ec"/><stop offset="1" stop-color="#d2d0e2"/></linearGradient>
<radialGradient id="hornL" cx="0.45" cy="0.45" r="0.6"><stop offset="0" stop-color="#d8c4a8"/><stop offset="0.55" stop-color="#e3d0b3"/><stop offset="1" stop-color="#ead9be"/></radialGradient>
<linearGradient id="bellG" x1="0" y1="0" x2="1" y2="0"><stop offset="0" stop-color="#d9a043"/><stop offset="0.5" stop-color="#f0c266"/><stop offset="1" stop-color="#dca548"/></linearGradient>
</defs>
<g filter="url(#soft)">
<path d="M1300,664 L1268,679 C1246,700 1224,716 1205,729 C1212,736 1200,746 1196,757 C1192,776 1199,794 1194,808 C1180,826 1150,830 1132,838 C1112,848 1096,860 1088,880 L1600,880 L1600,712 C1585,700 1570,688 1548,676 L1520,640 Z" fill="url(#hairG)"/>
<path d="M1274,680 C1290,676 1305,682 1314,694 C1320,720 1324,750 1324,778 L1300,783 C1292,790 1288,790 1284,800 C1280,760 1278,720 1274,680Z" fill="#aeabc2"/>
<path d="M1196,808 C1215,800 1235,815 1262,838 L1262,880 L1180,880 C1190,860 1210,842 1230,836 C1215,828 1205,818 1196,808Z" fill="#bcbacd"/>
<path d="M1150,834 C1170,836 1190,846 1200,860 L1196,880 L1120,880 C1126,862 1136,846 1150,834Z" fill="#c5c3d6"/>
<path d="M1541,728 C1552,732 1558,750 1558,780 C1556,796 1550,804 1544,800 C1546,776 1544,750 1541,728Z" fill="#b1aec6"/>
<path d="M1205,729 C1230,716 1250,700 1268,680 L1282,690 C1262,712 1240,728 1214,738Z" fill="#e4e3ee"/>
<path d="M1545,690 C1565,694 1580,700 1600,712 L1600,740 C1585,722 1565,708 1545,700Z" fill="#e6e5ef"/>
<path d="M1290,850 C1320,838 1350,830 1390,826 L1470,826 C1500,832 1520,838 1540,846 L1560,880 L1270,880Z" fill="#f4f1f6"/>
<path d="M1392,828 L1466,828 L1462,848 L1398,848Z" fill="#fae9e6"/>
<path d="M1345,846 C1380,838 1480,838 1500,846 L1504,862 C1470,856 1380,856 1344,864Z" fill="#ffffff"/>
<path d="M1350,864 L1500,862 L1505,880 L1345,880Z" fill="#e9dfe9"/>
<path d="M1301,781 C1318,784 1336,790 1346,796 C1356,804 1362,812 1362,818 C1358,826 1352,832 1345,836 C1326,846 1308,850 1290,853 C1280,852 1270,850 1263,848 C1264,838 1266,830 1268,825 C1272,816 1275,812 1278,808 C1286,798 1294,788 1301,781Z" fill="#c8b1e1"/>
<path d="M1301,781 C1294,788 1286,798 1278,808 C1272,816 1266,830 1263,848 L1272,850 C1276,832 1284,814 1306,790Z" fill="#b79fd8"/>
<path d="M1473,812 C1480,804 1488,796 1497,790 C1508,786 1520,784 1531,784 C1544,788 1556,796 1566,808 C1574,818 1580,830 1583,844 C1566,846 1548,844 1530,840 C1512,836 1498,832 1486,828Z" fill="#c8b1e1"/>
<path d="M1531,784 C1544,788 1556,796 1566,808 C1574,818 1580,830 1583,844 L1576,845 C1572,828 1564,812 1552,800 C1546,794 1538,788 1531,784Z" fill="#b79fd8"/>
<path d="M1318,822 l8,8 m0,-8 l-8,8" stroke="#e9def3" stroke-width="1.6" fill="none"/>
<path d="M1292,834 l8,8 m0,-8 l-8,8" stroke="#e9def3" stroke-width="1.6" fill="none"/>
<path d="M1344,808 l8,8 m0,-8 l-8,8" stroke="#e9def3" stroke-width="1.6" fill="none"/>
<path d="M1494,808 l8,8 m0,-8 l-8,8" stroke="#e9def3" stroke-width="1.6" fill="none"/>
<path d="M1532,822 l8,8 m0,-8 l-8,8" stroke="#e9def3" stroke-width="1.6" fill="none"/>
<path d="M1558,832 l8,8 m0,-8 l-8,8" stroke="#e9def3" stroke-width="1.6" fill="none"/>
<path d="M1490,806 C1498,812 1502,824 1500,836 C1506,848 1504,862 1498,880 L1484,880 C1488,862 1484,850 1486,838 C1482,826 1484,814 1490,806Z" fill="#d9d7e8" stroke="#b9b6cc" stroke-width="1"/>
<path d="M1303,572 C1302,545 1312,520 1330,503 C1352,484 1382,473 1412,472 C1440,471 1466,478 1486,490 C1510,505 1528,526 1532,548 C1533,556 1530,564 1526,572 L1512,640 L1356,640 L1340,600Z" fill="#ecebf4"/>
<path d="M1330,503 C1352,484 1382,473 1412,472 C1440,471 1466,478 1486,490 C1460,484 1430,482 1400,486 C1372,490 1348,498 1330,510Z" fill="#f8f8fc"/>
<path d="M1366,606 C1372,578 1390,548 1412,531 C1422,524 1436,522 1446,526 C1472,540 1496,568 1506,606 L1508,664 L1364,664Z" fill="#d7d4eb"/>
<path d="M1420,530 C1400,550 1388,580 1386,640 M1428,528 C1432,560 1440,600 1470,640 M1428,528 C1450,550 1480,580 1490,640" stroke="#b7b3d0" stroke-width="1.2" fill="none"/>
<ellipse cx="1446" cy="584" rx="30" ry="7" fill="#e9e7f6" opacity=".8"/>
<path d="M1368,655 L1502,655 L1500,700 C1494,716 1484,726 1470,734 L1438,750 C1424,746 1408,738 1396,728 C1382,716 1372,704 1368,690Z" fill="#fcece9"/>
<path d="M1420,742 L1452,742 L1450,772 L1420,772Z" fill="#f5dcdc"/>
<ellipse cx="1389" cy="700" rx="15" ry="8" fill="#f9c9cf" opacity=".75" filter="url(#soft2)"/>
<ellipse cx="1482" cy="700" rx="15" ry="8" fill="#f9c9cf" opacity=".75" filter="url(#soft2)"/>
<path d="M1372,683 C1384,688 1400,687 1413,681" stroke="#8f6f45" stroke-width="3.3" fill="none" stroke-linecap="round"/>
<path d="M1461,683 C1473,689 1486,689 1497,685" stroke="#8f6f45" stroke-width="3.3" fill="none" stroke-linecap="round"/>
<path d="M1421,725 C1428,727 1432,725 1435,726 C1440,727 1444,726 1448,724" stroke="#c98a8a" stroke-width="1.4" fill="none"/>
<path d="M1366,640 C1352,670 1336,700 1326,730 C1318,756 1316,776 1318,790 C1330,800 1348,796 1366,788 C1384,776 1396,760 1404,746 C1390,736 1378,724 1372,708 C1367,694 1366,670 1366,640Z" fill="#d8d6ea"/>
<path d="M1366,655 C1364,684 1372,708 1394,722 C1386,706 1378,690 1375,660Z" fill="#d3d0e7"/>
<path d="M1504,640 C1516,670 1532,700 1546,726 C1556,750 1558,772 1554,790 C1540,800 1522,798 1504,790 C1490,780 1478,766 1468,750 C1482,740 1494,726 1499,708 C1503,694 1504,670 1504,640Z" fill="#d8d6ea"/>
<path d="M1504,655 C1504,684 1498,708 1478,722 C1486,706 1492,690 1495,660Z" fill="#d3d0e7"/>
<path d="M1486,742 C1496,744 1502,760 1501,782 L1490,780 C1490,766 1488,752 1486,742Z" fill="#b3b0c8"/>
<path d="M1366,600 L1506,600 L1506,660 C1500,664 1494,658 1488,663 C1480,666 1474,659 1466,663 C1458,666 1452,660 1444,664 C1436,666 1430,660 1422,664 C1414,666 1408,660 1400,664 C1392,666 1386,660 1378,663 C1374,664 1370,662 1366,660Z" fill="#d9d6ec"/>
<path d="M1366,660 C1380,668 1400,668 1420,667 C1450,668 1480,668 1506,660 L1506,665 C1480,672 1390,672 1366,665Z" fill="#f4c9d3" opacity=".6"/>
<path d="M1376,630 L1377,661" stroke="#b9b5d2" stroke-width="1"/>
<path d="M1385,630 L1386,661" stroke="#b9b5d2" stroke-width="1"/>
<path d="M1394,630 L1395,661" stroke="#b9b5d2" stroke-width="1"/>
<path d="M1403,630 L1404,661" stroke="#b9b5d2" stroke-width="1"/>
<path d="M1412,630 L1413,661" stroke="#b9b5d2" stroke-width="1"/>
<path d="M1421,630 L1422,661" stroke="#b9b5d2" stroke-width="1"/>
<path d="M1430,630 L1431,661" stroke="#b9b5d2" stroke-width="1"/>
<path d="M1439,630 L1440,661" stroke="#b9b5d2" stroke-width="1"/>
<path d="M1448,630 L1449,661" stroke="#b9b5d2" stroke-width="1"/>
<path d="M1457,630 L1458,661" stroke="#b9b5d2" stroke-width="1"/>
<path d="M1466,630 L1467,661" stroke="#b9b5d2" stroke-width="1"/>
<path d="M1475,630 L1476,661" stroke="#b9b5d2" stroke-width="1"/>
<path d="M1484,630 L1485,661" stroke="#b9b5d2" stroke-width="1"/>
<path d="M1493,630 L1494,661" stroke="#b9b5d2" stroke-width="1"/>
<path d="M1502,630 L1503,661" stroke="#b9b5d2" stroke-width="1"/>
<path d="M1305,539 C1330,548 1352,572 1362,600 C1372,630 1366,656 1346,672 C1326,684 1298,684 1280,668 C1264,652 1258,628 1266,604 C1272,588 1284,576 1298,572 C1312,568 1326,574 1334,586 C1340,570 1326,550 1305,539Z" fill="#e8d7bb"/>
<path d="M1300,571 C1290,576 1286,590 1286,606 C1286,624 1294,638 1308,640 C1322,640 1334,628 1337,610 C1338,598 1336,590 1333,584 C1324,572 1310,568 1300,571Z" fill="#dccbb0"/>
<path d="M1300,622 C1306,612 1322,612 1330,620 C1326,634 1312,640 1302,634Z" fill="#a8a2b4"/><path d="M1316,616 C1324,614 1330,618 1330,624 C1326,632 1320,634 1316,630Z" fill="#ddd3dc"/>
<path d="M1312,545 C1338,560 1358,590 1360,625 C1360,645 1352,662 1338,672" stroke="#f2e6cf" stroke-width="4" fill="none" opacity=".8"/>
<path d="M1564,549 C1540,556 1520,578 1511,606 C1504,634 1510,660 1530,674 C1550,686 1580,684 1600,670 L1600,578 C1590,572 1578,572 1568,580 C1560,588 1556,596 1556,604 C1548,584 1552,562 1564,549Z" fill="#e8d7bb"/>
<path d="M1600,576 C1588,570 1572,572 1560,582 C1546,594 1538,612 1538,626 C1540,640 1552,648 1570,648 L1600,644Z" fill="#dccbb0"/>
<ellipse cx="1548" cy="634" rx="9" ry="8" fill="#f5d5d8"/><path d="M1541,630 L1556,634" stroke="#fff" stroke-width="2"/>
<path d="M1560,553 C1536,566 1518,594 1516,626 C1516,648 1524,664 1536,674" stroke="#f2e6cf" stroke-width="4" fill="none" opacity=".8"/>
<path d="M1356,770 C1372,762 1396,766 1410,776 L1430,776 C1444,766 1468,762 1486,768 C1484,790 1470,812 1450,826 C1436,832 1404,832 1390,826 C1372,814 1360,792 1356,770Z" fill="#f5f2f6"/>
<path d="M1362,776 L1396,812 M1372,770 L1402,806 M1480,774 L1444,812 M1470,770 L1438,806" stroke="#d9d2de" stroke-width="1.5"/>
<path d="M1416,764 C1408,754 1396,752 1392,756 C1390,764 1392,774 1398,778 C1406,778 1412,772 1416,766 C1420,772 1428,778 1436,778 C1442,774 1444,764 1442,756 C1436,752 1424,754 1416,764Z" fill="#9c8ad3"/>
<path d="M1410,770 C1408,780 1406,786 1402,790 L1410,790 L1416,776 L1422,790 L1430,790 C1426,786 1424,780 1422,770Z" fill="#8e7bc8"/>
<path d="M1416,776 C1408,780 1404,790 1402,802 C1400,810 1397,814 1394,818 C1402,822 1430,822 1440,818 C1436,814 1434,810 1432,802 C1430,790 1426,780 1416,776Z" fill="url(#bellG)"/>
<path d="M1414,796 L1420,796 L1419,822 L1415,822Z" fill="#c98f35" opacity=".7"/>
<circle cx="1497" cy="521" r="11" fill="#c4a9e6"/>
<circle cx="1510" cy="513" r="11" fill="#c4a9e6"/>
<circle cx="1523" cy="521" r="11" fill="#c4a9e6"/>
<circle cx="1523" cy="537" r="11" fill="#c4a9e6"/>
<circle cx="1510" cy="545" r="11" fill="#c4a9e6"/>
<circle cx="1497" cy="537" r="11" fill="#c4a9e6"/>
<circle cx="1510" cy="529" r="10" fill="#f7c3b6"/><circle cx="1506" cy="527" r="3" fill="#e99b52"/><circle cx="1513" cy="525" r="3" fill="#e99b52"/><circle cx="1511" cy="533" r="3" fill="#e99b52"/>
<ellipse cx="1475" cy="529" rx="11" ry="6" fill="#b9cf94" transform="rotate(8 1475 529)"/>
<circle cx="1362" cy="514" r="3" fill="#fff" stroke="#d5d3e2" stroke-width=".8"/>
<circle cx="1416" cy="498" r="3" fill="#fff" stroke="#d5d3e2" stroke-width=".8"/>
<circle cx="1478" cy="504" r="3" fill="#fff" stroke="#d5d3e2" stroke-width=".8"/>
<circle cx="1221" cy="786" r="4" fill="#ececf4" stroke="#c9c7d8" stroke-width=".8"/>
<circle cx="1156" cy="840" r="4" fill="#ececf4" stroke="#c9c7d8" stroke-width=".8"/>
<circle cx="1246" cy="749" r="4" fill="#ececf4" stroke="#c9c7d8" stroke-width=".8"/>
</g></svg>
</div>
</body>
</html>
